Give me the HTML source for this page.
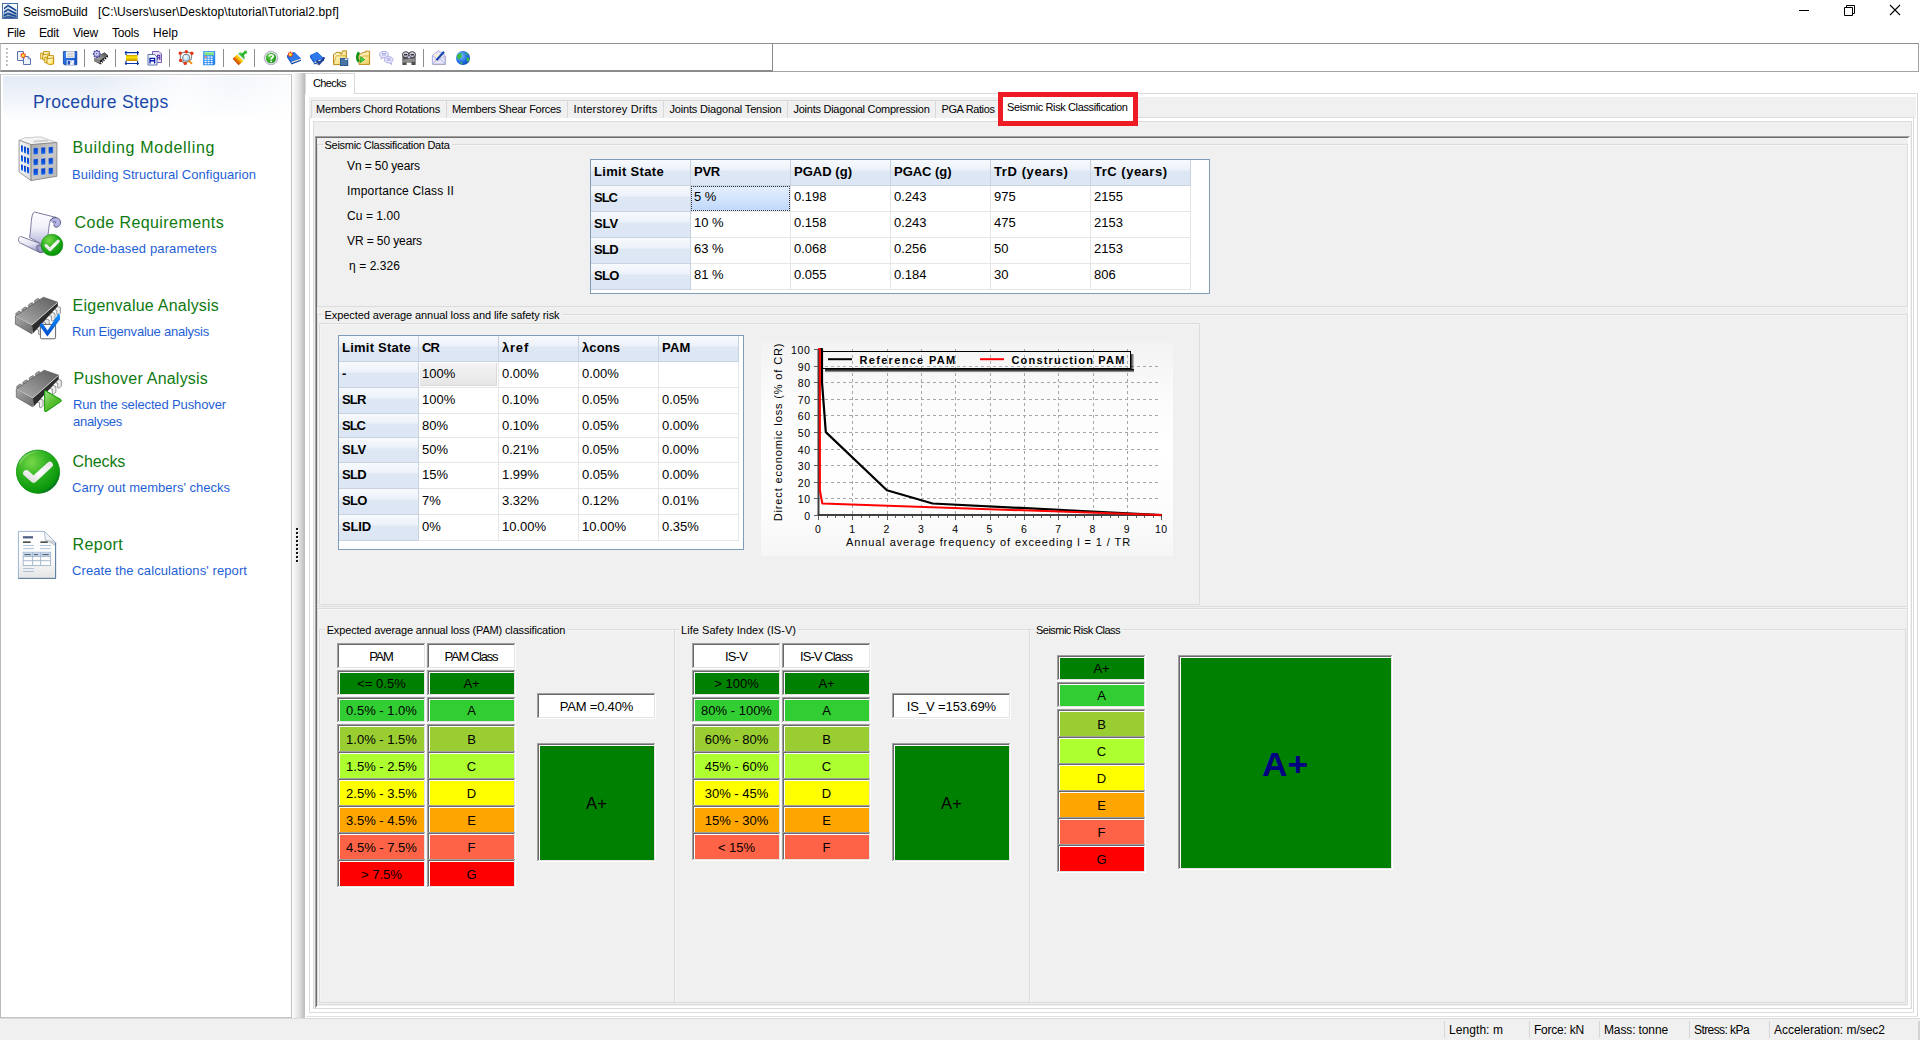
<!DOCTYPE html>
<html>
<head>
<meta charset="utf-8">
<title>SeismoBuild</title>
<style>
*{box-sizing:border-box;margin:0;padding:0}
html,body{width:1920px;height:1040px;overflow:hidden;background:#fff}
body{font-family:"Liberation Sans",sans-serif;font-size:11px;color:#000;position:relative}
.a{position:absolute}
.t{position:absolute;white-space:nowrap;line-height:1}
svg{position:absolute;overflow:visible}
.sep{position:absolute;top:49px;width:1px;height:18px;background:#8e8e8e}
.hc{position:absolute;background:linear-gradient(180deg,#f7fafd 0%,#edf2fa 38%,#dee7f4 46%,#dce6f4 100%);border-right:1px solid #c9d3e0;border-bottom:1px solid #c9d3e0}
.c{position:absolute;background:#fff;border-right:1px solid #e6e6e6;border-bottom:1px solid #e6e6e6}
.bx{position:absolute;border-style:solid;border-width:1px;border-color:#7a7a7a #a9a9a9 #a9a9a9 #7a7a7a;box-shadow:inset 1px 1px 0 #b4b4b4,inset -1px -1px 0 #e8e8e8,1px 1px 0 #fff}
</style>
</head>
<body>
<svg style="left:2px;top:3px" width="16" height="16" viewBox="0 0 16 16"><defs><linearGradient id="ti" x1="0" y1="0" x2="0" y2="1"><stop offset="0" stop-color="#fff"/><stop offset=".45" stop-color="#e8eef6"/><stop offset="1" stop-color="#5c7ca8"/></linearGradient></defs><rect x=".5" y=".5" width="15" height="15" fill="url(#ti)" stroke="#4a70a6"/><path d="M2 4.8L6 1.4L14.4 6.8V8.6L6 3.6L2 6.6ZM2 8.2L6 5.4L14.4 10V11.8L6 7.6L2 10ZM2 11.6L6 9.4L14.4 12.8V14L6 11.4L2 13.2ZM2 14.4L6 13L14.4 14.8H2Z" fill="#0c3e8e"/><path d="M6 1.2V15" stroke="#8ea6c6" stroke-width=".6"/></svg>
<div class="t" style="left:23px;top:6px;font-size:12px;letter-spacing:-0.200px;">SeismoBuild</div>
<div class="t" style="left:98px;top:6px;font-size:12px;letter-spacing:0.102px;">[C:\Users\user\Desktop\tutorial\Tutorial2.bpf]</div>
<svg style="left:1790px;top:-1px" width="130" height="22" viewBox="0 0 130 22"><path d="M9 11.5 H19" stroke="#000" stroke-width="1" fill="none"/><path d="M54.5 8.5 H62.5 V16.5 H54.5Z M56.5 8.5 V6.5 H64.5 V14.5 H62.5" stroke="#000" stroke-width="1" fill="none"/><path d="M100 6 L110 16 M110 6 L100 16" stroke="#000" stroke-width="1.1" fill="none"/></svg>
<div class="t" style="left:7px;top:27px;font-size:12px;letter-spacing:-0.334px;">File</div>
<div class="t" style="left:39px;top:27px;font-size:12px;letter-spacing:-0.170px;">Edit</div>
<div class="t" style="left:73px;top:27px;font-size:12px;letter-spacing:-0.198px;">View</div>
<div class="t" style="left:112px;top:27px;font-size:12px;letter-spacing:-0.203px;">Tools</div>
<div class="t" style="left:153px;top:27px;font-size:12px;letter-spacing:0.080px;">Help</div>
<div class="a" style="left:0px;top:43px;width:773px;height:29px;background:#fff;border-top:1px solid #8f8f8f;border-bottom:2px solid #8c8c8c;border-right:1px solid #8c8c8c;border-left:1px solid #c2c2c2"></div>
<div class="a" style="left:773px;top:43px;width:1146px;height:29px;background:#fff;border-top:1px solid #8f8f8f;border-bottom:1px solid #a3a3a3;border-right:1px solid #a3a3a3"></div>
<svg style="left:5px;top:48px" width="4" height="20" viewBox="0 0 4 20"><rect x="1" y="0" width="2" height="2" fill="#c9c9c9"/><rect x="1" y="0" width="1" height="1" fill="#a8a8a8"/><rect x="1" y="4" width="2" height="2" fill="#c9c9c9"/><rect x="1" y="4" width="1" height="1" fill="#a8a8a8"/><rect x="1" y="8" width="2" height="2" fill="#c9c9c9"/><rect x="1" y="8" width="1" height="1" fill="#a8a8a8"/><rect x="1" y="12" width="2" height="2" fill="#c9c9c9"/><rect x="1" y="12" width="1" height="1" fill="#a8a8a8"/><rect x="1" y="16" width="2" height="2" fill="#c9c9c9"/><rect x="1" y="16" width="1" height="1" fill="#a8a8a8"/></svg>
<div class="sep" style="left:84px"></div>
<div class="sep" style="left:115px"></div>
<div class="sep" style="left:169px"></div>
<div class="sep" style="left:223px"></div>
<div class="sep" style="left:254px"></div>
<div class="sep" style="left:423px"></div>
<div class="a" style="left:0px;top:74px;width:292px;height:944px;background:#fff;border-left:1px solid #b9b9b9;border-right:1px solid #c1c1c1;border-bottom:1px solid #c1c1c1;border-top:1px solid #cfcfcf"></div>
<div class="a" style="left:3px;top:76px;width:287px;height:46px;background:linear-gradient(100deg,rgba(255,255,255,0) 0%,rgba(255,255,255,0) 30%,rgba(255,255,255,.8) 62%,rgba(255,255,255,.55) 78%,rgba(255,255,255,.85) 100%),linear-gradient(180deg,#e4ebf6 0%,#ecf1f9 35%,#f6f8fc 70%,#fff 100%)"></div>
<div class="t" style="left:33px;top:94px;font-size:17.5px;color:#1b48a8;letter-spacing:0.343px;">Procedure Steps</div>
<div class="t" style="left:72.6px;top:140px;font-size:16px;color:#0f7a0f;letter-spacing:0.702px;">Building Modelling</div>
<div class="t" style="left:72px;top:168px;font-size:13px;color:#1f5fd6;letter-spacing:0.037px;">Building Structural Configuarion</div>
<div class="t" style="left:74.6px;top:215px;font-size:16px;color:#0f7a0f;letter-spacing:0.423px;">Code Requirements</div>
<div class="t" style="left:74px;top:242px;font-size:13px;color:#1f5fd6;letter-spacing:0.134px;">Code-based parameters</div>
<div class="t" style="left:72.6px;top:298px;font-size:16px;color:#0f7a0f;letter-spacing:0.220px;">Eigenvalue Analysis</div>
<div class="t" style="left:72px;top:325px;font-size:13px;color:#1f5fd6;letter-spacing:-0.233px;">Run Eigenvalue analysis</div>
<div class="t" style="left:73.6px;top:371px;font-size:16px;color:#0f7a0f;letter-spacing:0.221px;">Pushover Analysis</div>
<div class="t" style="left:73px;top:398px;font-size:13px;color:#1f5fd6;letter-spacing:-0.124px;">Run the selected Pushover</div>
<div class="t" style="left:73px;top:415px;font-size:13px;color:#1f5fd6;letter-spacing:-0.289px;">analyses</div>
<div class="t" style="left:72.6px;top:454px;font-size:16px;color:#0f7a0f;letter-spacing:-0.142px;">Checks</div>
<div class="t" style="left:72px;top:481px;font-size:13px;color:#1f5fd6;letter-spacing:0.008px;">Carry out members' checks</div>
<div class="t" style="left:72.6px;top:537px;font-size:16px;color:#0f7a0f;letter-spacing:0.413px;">Report</div>
<div class="t" style="left:72px;top:564px;font-size:13px;color:#1f5fd6;letter-spacing:0.087px;">Create the calculations' report</div>
<div class="a" style="left:292px;top:73px;width:13px;height:945px;background:linear-gradient(90deg,#fdfdfd 0%,#f4f4f4 20%,#dedede 60%,#c2c2c2 90%,#bcbcbc 100%)"></div>
<svg style="left:296px;top:528px" width="4" height="40" viewBox="0 0 4 40"><rect x="1" y="1" width="2" height="2" fill="#fff"/><rect x="0" y="0" width="2" height="2" fill="#111"/><rect x="1" y="5" width="2" height="2" fill="#fff"/><rect x="0" y="4" width="2" height="2" fill="#111"/><rect x="1" y="9" width="2" height="2" fill="#fff"/><rect x="0" y="8" width="2" height="2" fill="#111"/><rect x="1" y="13" width="2" height="2" fill="#fff"/><rect x="0" y="12" width="2" height="2" fill="#111"/><rect x="1" y="17" width="2" height="2" fill="#fff"/><rect x="0" y="16" width="2" height="2" fill="#111"/><rect x="1" y="21" width="2" height="2" fill="#fff"/><rect x="0" y="20" width="2" height="2" fill="#111"/><rect x="1" y="25" width="2" height="2" fill="#fff"/><rect x="0" y="24" width="2" height="2" fill="#111"/><rect x="1" y="29" width="2" height="2" fill="#fff"/><rect x="0" y="28" width="2" height="2" fill="#111"/><rect x="1" y="33" width="2" height="2" fill="#fff"/><rect x="0" y="32" width="2" height="2" fill="#111"/></svg>
<div class="a" style="left:0px;top:1018px;width:1920px;height:22px;background:#f0f0f0;border-top:1px solid #dadada"></div>
<div class="a" style="left:1444px;top:1021px;width:1px;height:17px;background:#d7d7d7"></div>
<div class="a" style="left:1529px;top:1021px;width:1px;height:17px;background:#d7d7d7"></div>
<div class="a" style="left:1599px;top:1021px;width:1px;height:17px;background:#d7d7d7"></div>
<div class="a" style="left:1689px;top:1021px;width:1px;height:17px;background:#d7d7d7"></div>
<div class="a" style="left:1769px;top:1021px;width:1px;height:17px;background:#d7d7d7"></div>
<div class="t" style="left:1449px;top:1024px;font-size:12px;letter-spacing:0.070px;">Length: m</div>
<div class="t" style="left:1534px;top:1024px;font-size:12px;letter-spacing:-0.223px;">Force: kN</div>
<div class="t" style="left:1604px;top:1024px;font-size:12px;letter-spacing:-0.124px;">Mass: tonne</div>
<div class="t" style="left:1694px;top:1024px;font-size:12px;letter-spacing:-0.578px;">Stress: kPa</div>
<div class="t" style="left:1774px;top:1024px;font-size:12px;letter-spacing:-0.019px;">Acceleration: m/sec2</div>
<div class="a" style="left:1918px;top:1021px;width:2px;height:19px;background:#d4d4d4"></div>
<div class="a" style="left:354px;top:93px;width:1564px;height:1px;background:#d9d9d9"></div>
<div class="a" style="left:1917px;top:93px;width:1px;height:924px;background:#d9d9d9"></div>
<div class="a" style="left:306px;top:1016px;width:1612px;height:1px;background:#e3e3e3"></div>
<div class="a" style="left:305px;top:73px;width:50px;height:21px;background:#fff;border:1px solid #d9d9d9;border-bottom:none"></div>
<div class="t" style="left:313px;top:78px;font-size:11px;letter-spacing:-0.613px;">Checks</div>
<div class="a" style="left:309px;top:97px;width:1607px;height:21px;background:#f0f0f0"></div>
<div class="a" style="left:309px;top:117px;width:1605px;height:896px;background:#fff;border:1px solid #dcdcdc"></div>
<div class="a" style="left:313px;top:121px;width:1599px;height:888px;background:#f0f0f0;border:1px solid #dcdcdc"></div>
<div class="a" style="left:311px;top:100px;width:136px;height:18px;border:1px solid #d9d9d9;border-bottom:none;background:#f0f0f0"></div>
<div class="t" style="left:316px;top:104px;font-size:11px;letter-spacing:-0.191px;">Members Chord Rotations</div>
<div class="a" style="left:446px;top:100px;width:122px;height:18px;border:1px solid #d9d9d9;border-bottom:none;background:#f0f0f0"></div>
<div class="t" style="left:452px;top:104px;font-size:11px;letter-spacing:-0.296px;">Members Shear Forces</div>
<div class="a" style="left:567px;top:100px;width:97px;height:18px;border:1px solid #d9d9d9;border-bottom:none;background:#f0f0f0"></div>
<div class="t" style="left:573.5px;top:104px;font-size:11px;letter-spacing:0.184px;">Interstorey Drifts</div>
<div class="a" style="left:663px;top:100px;width:125px;height:18px;border:1px solid #d9d9d9;border-bottom:none;background:#f0f0f0"></div>
<div class="t" style="left:669.5px;top:104px;font-size:11px;letter-spacing:-0.173px;">Joints Diagonal Tension</div>
<div class="a" style="left:787px;top:100px;width:149px;height:18px;border:1px solid #d9d9d9;border-bottom:none;background:#f0f0f0"></div>
<div class="t" style="left:793.5px;top:104px;font-size:11px;letter-spacing:-0.262px;">Joints Diagonal Compression</div>
<div class="a" style="left:935px;top:100px;width:64px;height:18px;border:1px solid #d9d9d9;border-bottom:none;background:#f0f0f0"></div>
<div class="t" style="left:941.5px;top:104px;font-size:11px;letter-spacing:-0.386px;">PGA Ratios</div>
<div class="a" style="left:998px;top:92px;width:140px;height:34px;background:#fff;border:5px solid #ed1c24"></div>
<div class="t" style="left:1007px;top:102px;font-size:11px;letter-spacing:-0.382px;">Seismic Risk Classification</div>
<div class="a" style="left:315px;top:136px;width:1595px;height:872px;border-top:2px solid #6d6d6d;border-left:2px solid #6d6d6d;border-right:2px solid #fff;border-bottom:2px solid #fff"></div>
<div class="a" style="left:315px;top:136px;width:1594px;height:1px;background:#a2a2a2"></div>
<div class="a" style="left:315px;top:136px;width:1px;height:871px;background:#a2a2a2"></div>
<div class="a" style="left:317px;top:144px;width:1591px;height:1px;background:#dcdcdc"></div>
<div class="a" style="left:318px;top:145px;width:1589px;height:1px;background:#f5f5f5"></div>
<div class="a" style="left:317px;top:144px;width:1px;height:163px;background:#dcdcdc"></div>
<div class="a" style="left:318px;top:145px;width:1px;height:161px;background:#f5f5f5"></div>
<div class="a" style="left:1907px;top:144px;width:1px;height:163px;background:#dcdcdc"></div>
<div class="a" style="left:317px;top:306px;width:1591px;height:1px;background:#dcdcdc"></div>
<div class="a" style="left:322.5px;top:138px;width:129px;height:13px;background:#f0f0f0"></div>
<div class="t" style="left:324.5px;top:140px;font-size:11px;letter-spacing:-0.284px;">Seismic Classification Data</div>
<div class="a" style="left:317px;top:314px;width:1591px;height:1px;background:#dcdcdc"></div>
<div class="a" style="left:318px;top:315px;width:1589px;height:1px;background:#f5f5f5"></div>
<div class="a" style="left:317px;top:314px;width:1px;height:293px;background:#dcdcdc"></div>
<div class="a" style="left:318px;top:315px;width:1px;height:291px;background:#f5f5f5"></div>
<div class="a" style="left:1907px;top:314px;width:1px;height:293px;background:#dcdcdc"></div>
<div class="a" style="left:317px;top:606px;width:1591px;height:1px;background:#dcdcdc"></div>
<div class="a" style="left:322.5px;top:308px;width:239px;height:13px;background:#f0f0f0"></div>
<div class="t" style="left:324.5px;top:310px;font-size:11px;letter-spacing:-0.071px;">Expected average annual loss and life safety risk</div>
<div class="a" style="left:319px;top:323px;width:881px;height:1px;background:#dcdcdc"></div>
<div class="a" style="left:320px;top:324px;width:879px;height:1px;background:#f5f5f5"></div>
<div class="a" style="left:319px;top:323px;width:1px;height:282px;background:#dcdcdc"></div>
<div class="a" style="left:320px;top:324px;width:1px;height:280px;background:#f5f5f5"></div>
<div class="a" style="left:1199px;top:323px;width:1px;height:282px;background:#dcdcdc"></div>
<div class="a" style="left:319px;top:604px;width:881px;height:1px;background:#dcdcdc"></div>
<div class="a" style="left:317px;top:608px;width:1591px;height:1px;background:#dcdcdc"></div>
<div class="a" style="left:318px;top:609px;width:1589px;height:1px;background:#f5f5f5"></div>
<div class="a" style="left:317px;top:608px;width:1px;height:397px;background:#dcdcdc"></div>
<div class="a" style="left:318px;top:609px;width:1px;height:395px;background:#f5f5f5"></div>
<div class="a" style="left:1907px;top:608px;width:1px;height:397px;background:#dcdcdc"></div>
<div class="a" style="left:317px;top:1004px;width:1591px;height:1px;background:#dcdcdc"></div>
<div class="a" style="left:319px;top:629px;width:356px;height:1px;background:#dcdcdc"></div>
<div class="a" style="left:320px;top:630px;width:354px;height:1px;background:#f5f5f5"></div>
<div class="a" style="left:319px;top:629px;width:1px;height:374px;background:#dcdcdc"></div>
<div class="a" style="left:320px;top:630px;width:1px;height:372px;background:#f5f5f5"></div>
<div class="a" style="left:674px;top:629px;width:1px;height:374px;background:#dcdcdc"></div>
<div class="a" style="left:319px;top:1002px;width:356px;height:1px;background:#dcdcdc"></div>
<div class="a" style="left:324.7px;top:623px;width:242.5px;height:13px;background:#f0f0f0"></div>
<div class="t" style="left:326.7px;top:625px;font-size:11px;letter-spacing:-0.157px;">Expected average annual loss (PAM) classification</div>
<div class="a" style="left:674px;top:629px;width:356px;height:1px;background:#dcdcdc"></div>
<div class="a" style="left:675px;top:630px;width:354px;height:1px;background:#f5f5f5"></div>
<div class="a" style="left:674px;top:629px;width:1px;height:374px;background:#dcdcdc"></div>
<div class="a" style="left:675px;top:630px;width:1px;height:372px;background:#f5f5f5"></div>
<div class="a" style="left:1029px;top:629px;width:1px;height:374px;background:#dcdcdc"></div>
<div class="a" style="left:674px;top:1002px;width:356px;height:1px;background:#dcdcdc"></div>
<div class="a" style="left:679px;top:623px;width:119px;height:13px;background:#f0f0f0"></div>
<div class="t" style="left:681px;top:625px;font-size:11px;letter-spacing:0.053px;">Life Safety Index (IS-V)</div>
<div class="a" style="left:1029px;top:629px;width:877px;height:1px;background:#dcdcdc"></div>
<div class="a" style="left:1030px;top:630px;width:875px;height:1px;background:#f5f5f5"></div>
<div class="a" style="left:1029px;top:629px;width:1px;height:374px;background:#dcdcdc"></div>
<div class="a" style="left:1030px;top:630px;width:1px;height:372px;background:#f5f5f5"></div>
<div class="a" style="left:1905px;top:629px;width:1px;height:374px;background:#dcdcdc"></div>
<div class="a" style="left:1029px;top:1002px;width:877px;height:1px;background:#dcdcdc"></div>
<div class="a" style="left:1034px;top:623px;width:88px;height:13px;background:#f0f0f0"></div>
<div class="t" style="left:1036px;top:625px;font-size:11px;letter-spacing:-0.528px;">Seismic Risk Class</div>
<div class="t" style="left:347px;top:160px;font-size:12px;letter-spacing:-0.106px;">Vn = 50 years</div>
<div class="t" style="left:347px;top:185px;font-size:12px;letter-spacing:0.191px;">Importance Class II</div>
<div class="t" style="left:347px;top:210px;font-size:12px;letter-spacing:0.070px;">Cu = 1.00</div>
<div class="t" style="left:347px;top:235px;font-size:12px;letter-spacing:-0.106px;">VR = 50 years</div>
<div class="t" style="left:349px;top:260px;font-size:12px;letter-spacing:0.069px;">η = 2.326</div>
<svg style="left:0;top:0" width="480" height="72" viewBox="0 0 480 72">
<defs><linearGradient id="fy" x1="0" y1="0" x2="1" y2="1"><stop offset="0" stop-color="#fffce4"/><stop offset=".55" stop-color="#fae898"/><stop offset="1" stop-color="#eec450"/></linearGradient><linearGradient id="gy" x1="0" y1="0" x2="0" y2="1"><stop offset="0" stop-color="#c89600"/><stop offset=".35" stop-color="#ffe800"/><stop offset="1" stop-color="#c08c00"/></linearGradient><linearGradient id="bb" x1="0" y1="0" x2="1" y2="1"><stop offset="0" stop-color="#3a86f0"/><stop offset="1" stop-color="#0a48c0"/></linearGradient><radialGradient id="gl" cx=".35" cy=".35" r=".8"><stop offset="0" stop-color="#7cc4ff"/><stop offset=".6" stop-color="#1e68e0"/><stop offset="1" stop-color="#0c3cb0"/></radialGradient><radialGradient id="hg" cx=".4" cy=".35" r=".8"><stop offset="0" stop-color="#5cd040"/><stop offset="1" stop-color="#108a10"/></radialGradient><linearGradient id="br" x1=".75" y1=".25" x2=".2" y2=".8"><stop offset="0" stop-color="#ffe808"/><stop offset=".3" stop-color="#f8c400"/><stop offset=".55" stop-color="#e87800"/><stop offset=".85" stop-color="#c04000"/></linearGradient><linearGradient id="cl" x1="0" y1="0" x2="1" y2="1"><stop offset="0" stop-color="#58b0ff"/><stop offset="1" stop-color="#1c78e8"/></linearGradient><linearGradient id="fy2" x1="0" y1="0" x2="1" y2="1"><stop offset="0" stop-color="#fffef0"/><stop offset=".5" stop-color="#fff0a0"/><stop offset="1" stop-color="#ffd820"/></linearGradient><linearGradient id="chp" x1="0" y1="1" x2="1" y2="0"><stop offset="0" stop-color="#b4b4b4"/><stop offset=".6" stop-color="#787878"/><stop offset="1" stop-color="#484848"/></linearGradient></defs>
<g transform="translate(16 50)"><path d="M1.5 1.5H7.4V10.5H1.5Z" fill="#f0f4fb" stroke="#5a72b0"/><path d="M7.5 6.5H12.2L14.5 8.8V14.5H7.5Z" fill="#eef2fb" stroke="#5a72b0"/><path d="M12.2 6.5V8.8H14.5" fill="#cfd8ee" stroke="#5a72b0" stroke-width=".8"/><path d="M0 -3.3L.9 -1.6L2.7 -2L2 -.4L3.3 .8L1.6 1.2L1.4 3L0 1.9L-1.4 3L-1.6 1.2L-3.3 .8L-2 -.4L-2.7 -2L-.9 -1.6Z" transform="translate(7.2 5.4)" fill="#f0381c"/><circle cx="7.2" cy="5.4" r="1.5" fill="#ffe030"/></g>
<g transform="translate(39 50)"><g transform="translate(1 1)"><path d="M3.4 .6H9.4V7.4H3.4Z" fill="#fff6c0" stroke="#c08a00" stroke-width=".9"/><path d="M.6 2.2H2.6V3.4H3.6V6.6H2.6V7.8H.6Z" fill="#fff0a0" stroke="#c08a00" stroke-width=".8"/><path d="M2.8 3.8L9.4 2.8V9L5.6 9.6L2.8 8.6Z" fill="url(#fy2)" stroke="#c08a00" stroke-width=".9" stroke-linejoin="round"/></g><g transform="translate(5.2 5)"><path d="M3.4 .6H9.4V7.4H3.4Z" fill="#fff6c0" stroke="#c08a00" stroke-width=".9"/><path d="M.6 2.2H2.6V3.4H3.6V6.6H2.6V7.8H.6Z" fill="#fff0a0" stroke="#c08a00" stroke-width=".8"/><path d="M2.8 3.8L9.4 2.8V9L5.6 9.6L2.8 8.6Z" fill="url(#fy2)" stroke="#c08a00" stroke-width=".9" stroke-linejoin="round"/></g></g>
<g transform="translate(62 50)"><path d="M1.4 1.5 H14.8 V14.8 H2.4 L1.4 13.8Z" fill="url(#bb)" stroke="#123c9c" stroke-width=".8"/><rect x="4" y="1.3" width="8.6" height="6.6" fill="#f4f4f4"/><path d="M5 3.2h6.6M5 4.8h6.6M5 6.4h6.6" stroke="#b8b8b8" stroke-width=".7"/><rect x="4.6" y="10.2" width="7.6" height="4.8" fill="#d4dcec"/><rect x="5.8" y="11" width="2.2" height="3.6" fill="#1c50b8"/><path d="M9 14.5 L11.5 10.5" stroke="#fff" stroke-width="1.2"/></g>
<g transform="translate(92 50)"><path d="M2 8.6L12.4 2.6L15.8 5.2L16 7L8.8 14.6L2 11Z" fill="#161616"/><path d="M2 8.6L12.4 2.6L15.8 5.2L7.8 10.8Z" fill="url(#chp)"/><path d="M2 8.6L7.8 10.8L8.4 13.6L2 11Z" fill="#8a8a8a"/><path d="M9 13.2L15.6 6.4" stroke="#fff" stroke-width="1.5" stroke-dasharray="1.2 1.2"/><g transform="translate(4.8 3.8)"><path d="M-.9 -3.9h1.8v7.8h-1.8zM-3.9 -.9h7.8v1.8h-7.8z" fill="#34349a"/><path d="M-.9 -3.9h1.8v7.8h-1.8zM-3.9 -.9h7.8v1.8h-7.8z" fill="#34349a" transform="rotate(45)"/><circle r="2.9" fill="#b4b4e4" stroke="#5858b0" stroke-width=".6"/><circle r="1.5" fill="#e8e8fa"/><circle r=".7" fill="#3c3ca0"/></g></g>
<g transform="translate(124 50)"><rect x="2" y="5" width="11.6" height="6" fill="url(#gy)"/><path d="M.8 2.6H15M.8 13.5H15M2 1V5M13.6 1V5M2 11V15M13.6 11V15" stroke="#0a34a4" stroke-width="1.2" fill="none"/></g>
<g transform="translate(147 50)"><path d="M5.5 1.5H12L14.5 4V12.5H5.5Z" fill="#e8e2f6" stroke="#7a5eb0"/><path d="M10.6 10V5.4h2.2V10M10.6 7.6h2.2" stroke="#5a30a8" stroke-width="1.1" fill="none"/><path d="M1 4.5H7.5L10 7V15H1Z" fill="#fafbff" stroke="#5c70ae"/><path d="M3 13.4V8.4h4.6v5M3 10.8h4.6" stroke="#0a1eb4" stroke-width="1.4" fill="none"/></g>
<g transform="translate(178 50)"><path d="M2.3 3.2L8.3 1.8L13.8 3.2L13.2 9.2L7.2 13.4L2.6 10.4Z" fill="none" stroke="#8c8c8c" stroke-width="1.3"/><path d="M10.4 10.4L14 13.8" stroke="#f09020" stroke-width="2"/><circle cx="8.1" cy="7.7" r="3.4" fill="#c8e8fc" stroke="#808890" stroke-width="1.1"/><circle cx="7.4" cy="7" r="1.4" fill="#f0faff"/><circle cx="2.3" cy="3.2" r="1.7" fill="#e83418"/><circle cx="8.3" cy="1.8" r="1.7" fill="#e83418"/><circle cx="13.8" cy="3.2" r="1.7" fill="#e83418"/><circle cx="2.6" cy="10.4" r="1.7" fill="#e83418"/><circle cx="7.2" cy="13.4" r="1.7" fill="#e83418"/></g>
<g transform="translate(201 50)"><path d="M2 1H14.2V14L13 15.2H2Z" fill="url(#cl)"/><rect x="3.4" y="2.2" width="9.4" height="3" fill="#80e080"/><rect x="3.4" y="2.2" width="9.4" height="1" fill="#b0f0a8"/><rect x="3.6" y="6.4" width="2" height="1.3" fill="#fff"/><rect x="6.6" y="6.4" width="2" height="1.3" fill="#fff"/><rect x="9.6" y="6.4" width="2" height="1.3" fill="#fff"/><rect x="3.6" y="8.6" width="2" height="1.3" fill="#fff"/><rect x="6.6" y="8.6" width="2" height="1.3" fill="#fff"/><rect x="9.6" y="8.6" width="2" height="1.3" fill="#fff"/><rect x="3.6" y="10.8" width="2" height="1.3" fill="#fff"/><rect x="6.6" y="10.8" width="2" height="1.3" fill="#fff"/><rect x="9.6" y="10.8" width="2" height="1.3" fill="#fff"/><rect x="3.6" y="13" width="2" height="1.3" fill="#fff"/><rect x="6.6" y="13" width="2" height="1.3" fill="#fff"/><rect x="9.6" y="13" width="2" height="1.3" fill="#fff"/><rect x="3.6" y="6.4" width="2" height="1.3" fill="#f05040"/></g>
<g transform="translate(232 50)"><path d="M5 4.6L11.4 11L6.6 15.2L.6 8.8Z" fill="url(#br)"/><path d="M6.2 3.4Q8.6 1.6 11.2 3.4Q13.2 6 12.6 9.8Z" fill="#34b834"/><path d="M7.4 3.2Q9 2.4 10.6 3.4" stroke="#90e880" stroke-width=".9" fill="none"/><path d="M11 4.4L13.2 2.4" stroke="#2cae2c" stroke-width="2.2" stroke-linecap="round"/><circle cx="13.4" cy="2.3" r="1.7" fill="#38bc38"/><path d="M5.6 4L12 10.4" stroke="#e4e4f6" stroke-width="1.3"/></g>
<g transform="translate(263 50)"><circle cx="8" cy="8" r="6.8" fill="#d2cce0" stroke="#a49cb8" stroke-width=".7"/><circle cx="8" cy="8" r="5.7" fill="#fff"/><circle cx="8" cy="8" r="5.2" fill="url(#hg)"/><path d="M6 6.4C6 4.2 10.2 4.2 10.2 6.4C10.2 7.8 8.2 7.8 8.2 9.4" stroke="#fff" stroke-width="1.7" fill="none"/><rect x="7.3" y="10.6" width="1.8" height="1.6" fill="#fff"/></g>
<g transform="translate(286 50)"><path d="M1 5.2L8.2 2L15 8.4V10.6L5.4 14.2L1 7.2Z" fill="#1a5cd0"/><path d="M1 5.2L8.2 2L15 8.4L5.6 11.8Z" fill="#2e78ec"/><path d="M5.6 11.8L15 8.4V10L5.6 13.4Z" fill="#f0e6c4"/><path d="M5.4 13.2L15 9.8V10.8L5.4 14.4Z" fill="#1448b0"/><path d="M0 -3.3L.9 -1.6L2.7 -2L2 -.4L3.3 .8L1.6 1.2L1.4 3L0 1.9L-1.4 3L-1.6 1.2L-3.3 .8L-2 -.4L-2.7 -2L-.9 -1.6Z" transform="translate(4.4 4.4)" fill="#f0381c"/><circle cx="4.4" cy="4.4" r="1.5" fill="#ffe030"/></g>
<g transform="translate(309 50)"><path d="M1 5.2L8.2 2L15 8.4V10.6L5.4 14.2L1 7.2Z" fill="#1a5cd0"/><path d="M1 5.2L8.2 2L15 8.4L5.6 11.8Z" fill="#2e78ec"/><path d="M5.6 11.8L15 8.4V10L5.6 13.4Z" fill="#f0e6c4"/><path d="M5.4 13.2L15 9.8V10.8L5.4 14.4Z" fill="#1448b0"/><path d="M7.6 10.4L10.4 13.6L15.4 7.4" stroke="#1c3c9c" stroke-width="2.2" fill="none"/><path d="M7.8 13.6L10 15" stroke="#888" stroke-width="1.4"/></g>
<g transform="translate(332 50)"><path d="M1.5 14.6V4.6L3 4L4 2.4H8.4V4H10V1.4L11 .8H14.4V14.6Z" fill="url(#fy)" stroke="#b68008" stroke-width=".9"/><path d="M1.6 14.6L4.2 5.8H14.2" fill="none" stroke="#c89820" stroke-width=".7"/><rect x="8" y="8" width="8.2" height="8" fill="#2a5a92"/><path d="M9 10h6M9 12h6M9 14h6" stroke="#7c9cc4" stroke-width=".8"/><rect x="13" y="8.4" width="2.6" height="1.6" fill="#d8e4f4"/></g>
<g transform="translate(355 50)"><path d="M4 14.4V4H6.5L7.5 2.4H10.4V1.2H14.6V14.4Z" fill="url(#fy)" stroke="#b68008" stroke-width=".9"/><path d="M4.6 14L7.4 6H14.6" fill="none" stroke="#c89820" stroke-width=".7"/><path d="M3.4 1.4C.2 4 .2 9.6 3 12.6L4.8 11C3 8.4 3.2 5.4 5 3.2Z" fill="#149414"/><path d="M5.6 6.6L9.6 9.6L5.6 12.6Z" fill="#48d048" stroke="#149414" stroke-width=".7"/></g>
<g transform="translate(378 50)"><path d="M6 1.4C9 1.4 10.4 2.8 10.4 4.6C10.4 6.6 8.6 7.8 6 7.8C5.6 7.8 5.2 7.8 4.8 7.7L3 9.2L3.4 7.2C2 6.6 1.6 5.6 1.6 4.6C1.6 2.8 3 1.4 6 1.4Z" fill="#e4e4fc" stroke="#a8a8e0" stroke-width=".9"/><path d="M10.6 6.6C13.4 6.6 15 8 15 9.8C15 10.8 14.4 11.8 13.2 12.4L13.8 14.6L11.6 13C11.2 13 10.8 13 10.6 13C8 13 6.4 11.6 6.4 9.8C6.4 8 8 6.6 10.6 6.6Z" fill="#e4e4fc" stroke="#a8a8e0" stroke-width=".9"/><path d="M4 3.6h4M4 5h4M8.8 8.8h4M8.8 10.2h4" stroke="#9c9cd4" stroke-width=".8"/></g>
<g transform="translate(401 50)"><path d="M1.4 4H14.6V15H1.4Z" fill="#505050"/><path d="M1.4 9.6L14.6 8.2V11.4L5 12.6L1.4 12.2Z" fill="#8c8c8c"/><rect x="5.6" y="12.6" width="4.8" height="2.4" fill="#fff"/><ellipse cx="4.8" cy="4.6" rx="3.3" ry="2.9" fill="#d4d4ea" stroke="#3c3c3c" stroke-width="1"/><ellipse cx="11.2" cy="4.6" rx="3.3" ry="2.9" fill="#d4d4ea" stroke="#3c3c3c" stroke-width="1"/><path d="M3 4.8h3.4M9.6 4.8h3.4" stroke="#333" stroke-width="1.5"/><circle cx="8" cy="7.2" r="1.2" fill="#b8b8e0"/><rect x="1.4" y="1.2" width="13.2" height="3" fill="#fff" opacity="0"/></g>
<g transform="translate(431 50)"><path d="M1.4 5.4L7.6 .8L14 5.4V14.2H1.4Z" fill="#e6e6fc" stroke="#a4a4dc" stroke-width=".9"/><path d="M3.2 5V4H12V7L7.6 10Z" fill="#fbf4d4"/><path d="M1.4 5.6L7.6 10.2L14 5.6M1.6 14L6 9M13.8 14L9.4 9" fill="none" stroke="#b0b0e4" stroke-width=".8"/><path d="M13 1.8L5.4 10.2" stroke="#1646b4" stroke-width="2.2"/><path d="M5.4 10.2L4.4 11.6" stroke="#e8c890" stroke-width="1.6"/><path d="M1.6 14.6H14.6V6" stroke="#8c8c8c" stroke-width=".8" fill="none" opacity=".6"/></g>
<g transform="translate(454 50)"><circle cx="9" cy="8" r="7" fill="url(#gl)"/><path d="M3.2 5.4C4.4 3.6 6.4 2.6 7.8 3L7 4.6L8 6L6.6 8.2L5.2 9.4L3.4 8.2Z" fill="#38c038"/><path d="M11 2L13.6 3.4L14 5.2L12.4 4.6Z" fill="#38c038"/><path d="M13 7.2L15.4 8L15 10.6L13.6 12L12.6 10Z" fill="#38c038"/><path d="M6.6 12L8.4 12.4L8.2 14.2L6.4 13.6Z" fill="#38c038"/></g>
</svg>
<svg style="left:0;top:125px" width="80" height="470" viewBox="0 125 80 470">
<defs><linearGradient id="wb" x1="0" y1="0" x2="0" y2="1"><stop offset="0" stop-color="#0844cc"/><stop offset=".65" stop-color="#0c52dc"/><stop offset="1" stop-color="#3080f0"/></linearGradient><linearGradient id="wl" x1="0" y1="0" x2="1" y2="0"><stop offset="0" stop-color="#f8f8f8"/><stop offset="1" stop-color="#dcdcdc"/></linearGradient><linearGradient id="wr" x1="0" y1="0" x2="1" y2="1"><stop offset="0" stop-color="#a8a8a8"/><stop offset=".5" stop-color="#cacaca"/><stop offset="1" stop-color="#b4b4b4"/></linearGradient><linearGradient id="sc" x1="0" y1="0" x2="0" y2="1"><stop offset="0" stop-color="#fdfdff"/><stop offset=".5" stop-color="#f0f0fa"/><stop offset="1" stop-color="#b8b8dc"/></linearGradient><linearGradient id="sr" x1="0" y1="0" x2=".4" y2="1"><stop offset="0" stop-color="#fff"/><stop offset=".6" stop-color="#e0e0f0"/><stop offset="1" stop-color="#9c9cc8"/></linearGradient><radialGradient id="gc" cx=".35" cy=".28" r=".85"><stop offset="0" stop-color="#78d848"/><stop offset=".45" stop-color="#2cb020"/><stop offset=".8" stop-color="#0a980a"/><stop offset="1" stop-color="#0a8a0a"/></radialGradient><linearGradient id="ck" x1="0" y1="1" x2="1" y2="0"><stop offset="0" stop-color="#dcdcdc"/><stop offset=".5" stop-color="#fff"/><stop offset="1" stop-color="#e8e8e8"/></linearGradient><linearGradient id="c1a" x1="0" y1="0" x2="1" y2="1"><stop offset="0" stop-color="#a8a8a8"/><stop offset="1" stop-color="#6c6c6c"/></linearGradient><linearGradient id="c1b" x1="0" y1="1" x2="1" y2="0"><stop offset="0" stop-color="#b0b0b0"/><stop offset=".5" stop-color="#868686"/><stop offset="1" stop-color="#5c5c5c"/></linearGradient><linearGradient id="c2a" x1="0" y1="0" x2="1" y2="1"><stop offset="0" stop-color="#a8a8a8"/><stop offset="1" stop-color="#6c6c6c"/></linearGradient><linearGradient id="c2b" x1="0" y1="1" x2="1" y2="0"><stop offset="0" stop-color="#b0b0b0"/><stop offset=".5" stop-color="#868686"/><stop offset="1" stop-color="#5c5c5c"/></linearGradient><linearGradient id="bc" x1="0" y1="0" x2="0" y2="1"><stop offset="0" stop-color="#1898ff"/><stop offset="1" stop-color="#0048c8"/></linearGradient><linearGradient id="pl" x1="0" y1="0" x2="1" y2="1"><stop offset="0" stop-color="#a0e088"/><stop offset=".5" stop-color="#58c030"/><stop offset="1" stop-color="#38a818"/></linearGradient><linearGradient id="pg" x1="0" y1="0" x2="0" y2="1"><stop offset="0" stop-color="#fff"/><stop offset=".6" stop-color="#fafafa"/><stop offset="1" stop-color="#e4e4e4"/></linearGradient></defs>
<path d="M19.1 140.3L24.6 137.8L33 137.6L33.4 137H42L42.5 137.5L56.9 142.5L31.1 144.8Z" fill="#f4f4f4" stroke="#b8b8b8" stroke-width=".7"/><path d="M33.2 140.4L47 139.6L49 141.6L33.6 142.6Z" fill="#d0d0d0"/><path d="M19.1 140.3L31.1 144.6V180.6L19.1 172Z" fill="url(#wl)" stroke="#8c8c8c" stroke-width=".9"/><path d="M31.1 144.6L56.9 142.5V176.3L31.1 180.6Z" fill="url(#wr)" stroke="#868686" stroke-width=".9"/><path d="M33.2 147.8L38.2 147.4V154.5L33.2 155Z" fill="url(#wb)" stroke="#e4d8c8" stroke-width=".5"/><path d="M40.9 147.35L45.6 146.95V154.05L40.9 154.55Z" fill="url(#wb)" stroke="#e4d8c8" stroke-width=".5"/><path d="M48.3 146.9L53.2 146.5V153.6L48.3 154.1Z" fill="url(#wb)" stroke="#e4d8c8" stroke-width=".5"/><path d="M33.2 158.9L38.2 158.5V165.3L33.2 165.8Z" fill="url(#wb)" stroke="#e4d8c8" stroke-width=".5"/><path d="M40.9 158.45L45.6 158.05V164.85L40.9 165.35Z" fill="url(#wb)" stroke="#e4d8c8" stroke-width=".5"/><path d="M48.3 158L53.2 157.6V164.4L48.3 164.9Z" fill="url(#wb)" stroke="#e4d8c8" stroke-width=".5"/><path d="M33.2 168.7L38.2 168.3V175.2L33.2 175.7Z" fill="url(#wb)" stroke="#e4d8c8" stroke-width=".5"/><path d="M40.9 168.25L45.6 167.85V174.75L40.9 175.25Z" fill="url(#wb)" stroke="#e4d8c8" stroke-width=".5"/><path d="M48.3 167.8L53.2 167.4V174.3L48.3 174.8Z" fill="url(#wb)" stroke="#e4d8c8" stroke-width=".5"/><path d="M21 145L22.9 145.7V152.4L21 151.5Z" fill="url(#wb)"/><path d="M24 146.3L26 147V153.7L24 152.8Z" fill="url(#wb)"/><path d="M27 147.6L29.1 148.3V155L27 154.1Z" fill="url(#wb)"/><path d="M21 155L22.9 155.7V161.9L21 161Z" fill="url(#wb)"/><path d="M24 156.3L26 157V163.2L24 162.3Z" fill="url(#wb)"/><path d="M27 157.6L29.1 158.3V164.5L27 163.6Z" fill="url(#wb)"/><path d="M21 164.2L22.9 164.9V171.1L21 170.2Z" fill="url(#wb)"/><path d="M24 165.5L26 166.2V172.4L24 171.5Z" fill="url(#wb)"/><path d="M27 166.8L29.1 167.5V173.7L27 172.8Z" fill="url(#wb)"/>
<path d="M34.5 212C30.5 213 31.6 228 29.5 237.4L40.6 243.8L47 240C49 232 48.6 224 50.6 220C52 217.6 54 217.4 56 217.4Z" fill="url(#sc)" stroke="#5c5c88" stroke-width=".8"/><path d="M50.4 221C51.6 217.4 57 216.4 59.6 219.4C62 222.4 60 227.4 56 227.2C54.4 227 53.6 225.6 54 224.4" fill="#b4b4e4" stroke="#50507c" stroke-width=".9"/><path d="M53 222.4C54 221 56 221.4 55.6 223.2" fill="none" stroke="#50507c" stroke-width=".9"/><path d="M20.6 236.4C17.6 237.6 18 242 20.6 243.2L38.6 252C41.6 253.4 44.4 252.6 45 250L40.4 243.6Z" fill="url(#sr)" stroke="#606088" stroke-width=".8"/><ellipse cx="39.8" cy="248.6" rx="2.6" ry="4" transform="rotate(-25 39.8 248.6)" fill="#9c9cc4" stroke="#50507c" stroke-width=".7"/><circle cx="52" cy="245" r="10.8" fill="url(#gc)" stroke="#0c8c0c" stroke-width=".6"/><path d="M59 251A10.8 10.8 0 0 0 62.6 243A14 14 0 0 1 52 255.8A10.8 10.8 0 0 0 59 251Z" fill="#0a7a24" opacity=".8"/><path d="M46 245.6L50 249.6L58.2 241.2" fill="none" stroke="url(#ck)" stroke-width="3.2" stroke-linecap="round" stroke-linejoin="round"/>
<g transform="translate(0 0)"><rect x="15.7" y="311.9" width="5.4" height="3" rx="1.3" transform="rotate(-34 18.4 313.4)" fill="#a4a4a4" stroke="#5c5c5c" stroke-width=".7"/><rect x="21.8" y="307.8" width="5.4" height="3" rx="1.3" transform="rotate(-34 24.5 309.3)" fill="#a4a4a4" stroke="#5c5c5c" stroke-width=".7"/><rect x="28.2" y="303.5" width="5.4" height="3" rx="1.3" transform="rotate(-34 30.9 305)" fill="#a4a4a4" stroke="#5c5c5c" stroke-width=".7"/><rect x="34.3" y="299.3" width="5.4" height="3" rx="1.3" transform="rotate(-34 37 300.8)" fill="#a4a4a4" stroke="#5c5c5c" stroke-width=".7"/><path d="M36.6 328.6 l2.6 -2.6 l3 1 v5.8 l-2.2 2 l-1.4 -.6 v-4.4 l-2 -.4z" fill="#ececec" stroke="#6a6a6a" stroke-width=".7"/><path d="M43.6 321.6 l2.6 -2.6 l3 1 v5.8 l-2.2 2 l-1.4 -.6 v-4.4 l-2 -.4z" fill="#ececec" stroke="#6a6a6a" stroke-width=".7"/><path d="M49.4 315 l2.6 -2.6 l3 1 v5.8 l-2.2 2 l-1.4 -.6 v-4.4 l-2 -.4z" fill="#ececec" stroke="#6a6a6a" stroke-width=".7"/><path d="M54.8 309 l2.6 -2.6 l3 1 v5.8 l-2.2 2 l-1.4 -.6 v-4.4 l-2 -.4z" fill="#ececec" stroke="#6a6a6a" stroke-width=".7"/><path d="M32 324.9L57.8 302.2V306L32.6 333.8Z" fill="#2c2c2c"/><path d="M15.4 316L32 324.9L31.6 333.8L15.4 324.2Z" fill="url(#c1a)" stroke="#4a4a4a" stroke-width=".6"/><path d="M15.4 316L43.4 297.2L57.8 302.2L32 324.9Z" fill="url(#c1b)" stroke="#4a4a4a" stroke-width=".6"/><path d="M15.8 316.2L32 324.9L57.4 302.6" fill="none" stroke="#d8d8d8" stroke-width=".9"/></g><rect x="40.4" y="324.4" width="15.2" height="14.4" rx="1.6" fill="#fbfbfb" stroke="#555" stroke-width=".9"/><path d="M39.4 325.4L41.8 322.6L47.6 330.6L58.6 313.2L60 315.4V319.4L47.4 336.4Z" fill="url(#bc)"/>
<g transform="translate(0.9 73)"><rect x="15.7" y="311.9" width="5.4" height="3" rx="1.3" transform="rotate(-34 18.4 313.4)" fill="#a4a4a4" stroke="#5c5c5c" stroke-width=".7"/><rect x="21.8" y="307.8" width="5.4" height="3" rx="1.3" transform="rotate(-34 24.5 309.3)" fill="#a4a4a4" stroke="#5c5c5c" stroke-width=".7"/><rect x="28.2" y="303.5" width="5.4" height="3" rx="1.3" transform="rotate(-34 30.9 305)" fill="#a4a4a4" stroke="#5c5c5c" stroke-width=".7"/><rect x="34.3" y="299.3" width="5.4" height="3" rx="1.3" transform="rotate(-34 37 300.8)" fill="#a4a4a4" stroke="#5c5c5c" stroke-width=".7"/><path d="M36.6 328.6 l2.6 -2.6 l3 1 v5.8 l-2.2 2 l-1.4 -.6 v-4.4 l-2 -.4z" fill="#ececec" stroke="#6a6a6a" stroke-width=".7"/><path d="M43.6 321.6 l2.6 -2.6 l3 1 v5.8 l-2.2 2 l-1.4 -.6 v-4.4 l-2 -.4z" fill="#ececec" stroke="#6a6a6a" stroke-width=".7"/><path d="M49.4 315 l2.6 -2.6 l3 1 v5.8 l-2.2 2 l-1.4 -.6 v-4.4 l-2 -.4z" fill="#ececec" stroke="#6a6a6a" stroke-width=".7"/><path d="M54.8 309 l2.6 -2.6 l3 1 v5.8 l-2.2 2 l-1.4 -.6 v-4.4 l-2 -.4z" fill="#ececec" stroke="#6a6a6a" stroke-width=".7"/><path d="M32 324.9L57.8 302.2V306L32.6 333.8Z" fill="#2c2c2c"/><path d="M15.4 316L32 324.9L31.6 333.8L15.4 324.2Z" fill="url(#c2a)" stroke="#4a4a4a" stroke-width=".6"/><path d="M15.4 316L43.4 297.2L57.8 302.2L32 324.9Z" fill="url(#c2b)" stroke="#4a4a4a" stroke-width=".6"/><path d="M15.8 316.2L32 324.9L57.4 302.6" fill="none" stroke="#d8d8d8" stroke-width=".9"/></g><path d="M45.8 391L60.6 399.6Q62 400.6 60.6 401.6L46.4 411.2Q44.6 412 44.6 410.2V392Q44.6 390.4 45.8 391Z" fill="url(#pl)" stroke="#22a012" stroke-width="1.1" stroke-linejoin="round"/>
<circle cx="38" cy="471.7" r="21.6" fill="url(#gc)" stroke="#0c940c" stroke-width=".8"/><path d="M52 488.6A21.6 21.6 0 0 0 59.4 470A27 27 0 0 1 36 493.2A21.6 21.6 0 0 0 52 488.6Z" fill="#0a7828" opacity=".85"/><path d="M19.4 462A21 21 0 0 1 40 451.4A24 24 0 0 0 19.4 466Z" fill="#a8e890" opacity=".45"/><path d="M26.2 473.2L33.6 479.6L49.8 464.8" fill="none" stroke="url(#ck)" stroke-width="6.2" stroke-linecap="round" stroke-linejoin="round"/>
<path d="M18.4 531.4H44.4L55.6 542.4V578.4H18.4Z" fill="url(#pg)" stroke="#9cb2ce" stroke-width="1"/><path d="M55.6 542.4V578.4H18.4" fill="none" stroke="#5c7ca4" stroke-width="1"/><path d="M44.4 531.4L45.4 540.6Q50 540 55.6 542.6Z" fill="#f4f4f4" stroke="#9cb2ce" stroke-width=".8"/><path d="M46 541.4Q51 541 55.2 543.4L55.2 546Q51 542.4 46 541.4Z" fill="#888" opacity=".45"/><rect x="23" y="536.2" width="10" height="2.2" fill="#4a5c84"/><rect x="23" y="541.4" width="7.6" height="1.5" fill="#3c3c3c"/><rect x="40.4" y="541.4" width="7.4" height="1.5" fill="#3c3c3c"/><path d="M23 545.5H34M40 545.5H51M23 548.6H34M40 548.6H51M23 568.5H34M23 571.5H34" stroke="#a8bcd4" stroke-width=".9"/><rect x="23.2" y="552.3" width="27.4" height="13.3" fill="#fdfdfd" stroke="#a0b4cc" stroke-width=".9"/><rect x="23.6" y="552.7" width="26.6" height="3.6" fill="#c8d8ec"/><path d="M23.2 556.5H50.6M23.2 560.7H50.6M32.6 552.3V565.6M40.6 552.3V565.6" stroke="#a0b4cc" stroke-width=".9"/><path d="M24.4 554.6h6.4M34 554.6h4M42.4 554.6h6.4" stroke="#505868" stroke-width="1"/>
</svg>
<div class="a" style="left:590px;top:159px;width:620px;height:135px;background:#fff;border:1px solid #7f9db9"></div>
<div class="hc" style="left:591px;top:160px;width:100px;height:26px;"></div>
<div class="t" style="left:594px;top:165px;font-size:13px;font-weight:bold;letter-spacing:0.322px;">Limit State</div>
<div class="hc" style="left:691px;top:160px;width:100px;height:26px;"></div>
<div class="t" style="left:694px;top:165px;font-size:13px;font-weight:bold;letter-spacing:-0.243px;">PVR</div>
<div class="hc" style="left:791px;top:160px;width:100px;height:26px;"></div>
<div class="t" style="left:794px;top:165px;font-size:13px;font-weight:bold;letter-spacing:0.029px;">PGAD (g)</div>
<div class="hc" style="left:891px;top:160px;width:100px;height:26px;"></div>
<div class="t" style="left:894px;top:165px;font-size:13px;font-weight:bold;letter-spacing:-0.034px;">PGAC (g)</div>
<div class="hc" style="left:991px;top:160px;width:100px;height:26px;"></div>
<div class="t" style="left:994px;top:165px;font-size:13px;font-weight:bold;letter-spacing:0.598px;">TrD (years)</div>
<div class="hc" style="left:1091px;top:160px;width:100px;height:26px;"></div>
<div class="t" style="left:1094px;top:165px;font-size:13px;font-weight:bold;letter-spacing:0.507px;">TrC (years)</div>
<div class="hc" style="left:591px;top:186px;width:100px;height:26px;"></div>
<div class="t" style="left:594px;top:191px;font-size:13px;font-weight:bold;letter-spacing:-1.000px;">SLC</div>
<div class="c" style="left:691px;top:186px;width:100px;height:26px;"></div>
<div class="c" style="left:791px;top:186px;width:100px;height:26px;"></div>
<div class="t" style="left:794px;top:190px;font-size:13px;">0.198</div>
<div class="c" style="left:891px;top:186px;width:100px;height:26px;"></div>
<div class="t" style="left:894px;top:190px;font-size:13px;">0.243</div>
<div class="c" style="left:991px;top:186px;width:100px;height:26px;"></div>
<div class="t" style="left:994px;top:190px;font-size:13px;">975</div>
<div class="c" style="left:1091px;top:186px;width:100px;height:26px;"></div>
<div class="t" style="left:1094px;top:190px;font-size:13px;">2155</div>
<div class="hc" style="left:591px;top:212px;width:100px;height:26px;"></div>
<div class="t" style="left:594px;top:217px;font-size:13px;font-weight:bold;letter-spacing:-0.106px;">SLV</div>
<div class="c" style="left:691px;top:212px;width:100px;height:26px;"></div>
<div class="t" style="left:694px;top:216px;font-size:13px;">10 %</div>
<div class="c" style="left:791px;top:212px;width:100px;height:26px;"></div>
<div class="t" style="left:794px;top:216px;font-size:13px;">0.158</div>
<div class="c" style="left:891px;top:212px;width:100px;height:26px;"></div>
<div class="t" style="left:894px;top:216px;font-size:13px;">0.243</div>
<div class="c" style="left:991px;top:212px;width:100px;height:26px;"></div>
<div class="t" style="left:994px;top:216px;font-size:13px;">475</div>
<div class="c" style="left:1091px;top:212px;width:100px;height:26px;"></div>
<div class="t" style="left:1094px;top:216px;font-size:13px;">2153</div>
<div class="hc" style="left:591px;top:238px;width:100px;height:26px;"></div>
<div class="t" style="left:594px;top:243px;font-size:13px;font-weight:bold;letter-spacing:-0.667px;">SLD</div>
<div class="c" style="left:691px;top:238px;width:100px;height:26px;"></div>
<div class="t" style="left:694px;top:242px;font-size:13px;">63 %</div>
<div class="c" style="left:791px;top:238px;width:100px;height:26px;"></div>
<div class="t" style="left:794px;top:242px;font-size:13px;">0.068</div>
<div class="c" style="left:891px;top:238px;width:100px;height:26px;"></div>
<div class="t" style="left:894px;top:242px;font-size:13px;">0.256</div>
<div class="c" style="left:991px;top:238px;width:100px;height:26px;"></div>
<div class="t" style="left:994px;top:242px;font-size:13px;">50</div>
<div class="c" style="left:1091px;top:238px;width:100px;height:26px;"></div>
<div class="t" style="left:1094px;top:242px;font-size:13px;">2153</div>
<div class="hc" style="left:591px;top:264px;width:100px;height:26px;"></div>
<div class="t" style="left:594px;top:269px;font-size:13px;font-weight:bold;letter-spacing:-0.741px;">SLO</div>
<div class="c" style="left:691px;top:264px;width:100px;height:26px;"></div>
<div class="t" style="left:694px;top:268px;font-size:13px;">81 %</div>
<div class="c" style="left:791px;top:264px;width:100px;height:26px;"></div>
<div class="t" style="left:794px;top:268px;font-size:13px;">0.055</div>
<div class="c" style="left:891px;top:264px;width:100px;height:26px;"></div>
<div class="t" style="left:894px;top:268px;font-size:13px;">0.184</div>
<div class="c" style="left:991px;top:264px;width:100px;height:26px;"></div>
<div class="t" style="left:994px;top:268px;font-size:13px;">30</div>
<div class="c" style="left:1091px;top:264px;width:100px;height:26px;"></div>
<div class="t" style="left:1094px;top:268px;font-size:13px;">806</div>
<div class="a" style="left:691px;top:186px;width:99px;height:25px;background:linear-gradient(180deg,#e3eefd 0%,#d3e4fc 50%,#c0d9fb 100%);border:1px dotted #333"></div>
<div class="t" style="left:694px;top:190px;font-size:13px;">5 %</div>
<div class="a" style="left:338px;top:335px;width:406px;height:215px;background:#fff;border:1px solid #7f9db9"></div>
<div class="hc" style="left:339px;top:336px;width:80px;height:26px;"></div>
<div class="t" style="left:342px;top:341px;font-size:13px;font-weight:bold;letter-spacing:0.231px;">Limit State</div>
<div class="hc" style="left:419px;top:336px;width:80px;height:26px;"></div>
<div class="t" style="left:422px;top:341px;font-size:13px;font-weight:bold;letter-spacing:-0.888px;">CR</div>
<div class="hc" style="left:499px;top:336px;width:80px;height:26px;"></div>
<div class="t" style="left:502px;top:341px;font-size:13px;font-weight:bold;letter-spacing:0.788px;">λref</div>
<div class="hc" style="left:579px;top:336px;width:80px;height:26px;"></div>
<div class="t" style="left:582px;top:341px;font-size:13px;font-weight:bold;letter-spacing:0.085px;">λcons</div>
<div class="hc" style="left:659px;top:336px;width:80px;height:26px;"></div>
<div class="t" style="left:662px;top:341px;font-size:13px;font-weight:bold;letter-spacing:0.225px;">PAM</div>
<div class="hc" style="left:339px;top:362px;width:80px;height:26px;"></div>
<div class="t" style="left:342px;top:367px;font-size:13px;font-weight:bold;letter-spacing:-0.029px;">-</div>
<div class="c" style="left:419px;top:362px;width:80px;height:26px;"></div>
<div class="c" style="left:499px;top:362px;width:80px;height:26px;"></div>
<div class="t" style="left:502px;top:367px;font-size:13px;">0.00%</div>
<div class="c" style="left:579px;top:362px;width:80px;height:26px;"></div>
<div class="t" style="left:582px;top:367px;font-size:13px;">0.00%</div>
<div class="c" style="left:659px;top:362px;width:80px;height:26px;"></div>
<div class="hc" style="left:339px;top:388px;width:80px;height:26px;"></div>
<div class="t" style="left:342px;top:393px;font-size:13px;font-weight:bold;letter-spacing:-0.834px;">SLR</div>
<div class="c" style="left:419px;top:388px;width:80px;height:26px;"></div>
<div class="t" style="left:422px;top:393px;font-size:13px;">100%</div>
<div class="c" style="left:499px;top:388px;width:80px;height:26px;"></div>
<div class="t" style="left:502px;top:393px;font-size:13px;">0.10%</div>
<div class="c" style="left:579px;top:388px;width:80px;height:26px;"></div>
<div class="t" style="left:582px;top:393px;font-size:13px;">0.05%</div>
<div class="c" style="left:659px;top:388px;width:80px;height:26px;"></div>
<div class="t" style="left:662px;top:393px;font-size:13px;">0.05%</div>
<div class="hc" style="left:339px;top:414px;width:80px;height:24px;"></div>
<div class="t" style="left:342px;top:419px;font-size:13px;font-weight:bold;letter-spacing:-1.000px;">SLC</div>
<div class="c" style="left:419px;top:414px;width:80px;height:24px;"></div>
<div class="t" style="left:422px;top:419px;font-size:13px;">80%</div>
<div class="c" style="left:499px;top:414px;width:80px;height:24px;"></div>
<div class="t" style="left:502px;top:419px;font-size:13px;">0.10%</div>
<div class="c" style="left:579px;top:414px;width:80px;height:24px;"></div>
<div class="t" style="left:582px;top:419px;font-size:13px;">0.05%</div>
<div class="c" style="left:659px;top:414px;width:80px;height:24px;"></div>
<div class="t" style="left:662px;top:419px;font-size:13px;">0.00%</div>
<div class="hc" style="left:339px;top:438px;width:80px;height:25px;"></div>
<div class="t" style="left:342px;top:443px;font-size:13px;font-weight:bold;letter-spacing:-0.106px;">SLV</div>
<div class="c" style="left:419px;top:438px;width:80px;height:25px;"></div>
<div class="t" style="left:422px;top:443px;font-size:13px;">50%</div>
<div class="c" style="left:499px;top:438px;width:80px;height:25px;"></div>
<div class="t" style="left:502px;top:443px;font-size:13px;">0.21%</div>
<div class="c" style="left:579px;top:438px;width:80px;height:25px;"></div>
<div class="t" style="left:582px;top:443px;font-size:13px;">0.05%</div>
<div class="c" style="left:659px;top:438px;width:80px;height:25px;"></div>
<div class="t" style="left:662px;top:443px;font-size:13px;">0.00%</div>
<div class="hc" style="left:339px;top:463px;width:80px;height:26px;"></div>
<div class="t" style="left:342px;top:468px;font-size:13px;font-weight:bold;letter-spacing:-0.667px;">SLD</div>
<div class="c" style="left:419px;top:463px;width:80px;height:26px;"></div>
<div class="t" style="left:422px;top:468px;font-size:13px;">15%</div>
<div class="c" style="left:499px;top:463px;width:80px;height:26px;"></div>
<div class="t" style="left:502px;top:468px;font-size:13px;">1.99%</div>
<div class="c" style="left:579px;top:463px;width:80px;height:26px;"></div>
<div class="t" style="left:582px;top:468px;font-size:13px;">0.05%</div>
<div class="c" style="left:659px;top:463px;width:80px;height:26px;"></div>
<div class="t" style="left:662px;top:468px;font-size:13px;">0.00%</div>
<div class="hc" style="left:339px;top:489px;width:80px;height:26px;"></div>
<div class="t" style="left:342px;top:494px;font-size:13px;font-weight:bold;letter-spacing:-0.741px;">SLO</div>
<div class="c" style="left:419px;top:489px;width:80px;height:26px;"></div>
<div class="t" style="left:422px;top:494px;font-size:13px;">7%</div>
<div class="c" style="left:499px;top:489px;width:80px;height:26px;"></div>
<div class="t" style="left:502px;top:494px;font-size:13px;">3.32%</div>
<div class="c" style="left:579px;top:489px;width:80px;height:26px;"></div>
<div class="t" style="left:582px;top:494px;font-size:13px;">0.12%</div>
<div class="c" style="left:659px;top:489px;width:80px;height:26px;"></div>
<div class="t" style="left:662px;top:494px;font-size:13px;">0.01%</div>
<div class="hc" style="left:339px;top:515px;width:80px;height:26px;"></div>
<div class="t" style="left:342px;top:520px;font-size:13px;font-weight:bold;letter-spacing:-0.153px;">SLID</div>
<div class="c" style="left:419px;top:515px;width:80px;height:26px;"></div>
<div class="t" style="left:422px;top:520px;font-size:13px;">0%</div>
<div class="c" style="left:499px;top:515px;width:80px;height:26px;"></div>
<div class="t" style="left:502px;top:520px;font-size:13px;">10.00%</div>
<div class="c" style="left:579px;top:515px;width:80px;height:26px;"></div>
<div class="t" style="left:582px;top:520px;font-size:13px;">10.00%</div>
<div class="c" style="left:659px;top:515px;width:80px;height:26px;"></div>
<div class="t" style="left:662px;top:520px;font-size:13px;">0.35%</div>
<div class="a" style="left:419px;top:362px;width:79px;height:25px;background:linear-gradient(180deg,#f3f3f3 0%,#ececec 60%,#e4e4e4 100%);border:1px solid #fff;box-shadow:inset -1px -1px 0 #d9d9d9"></div>
<div class="t" style="left:422px;top:367px;font-size:13px;">100%</div>
<div class="a" style="left:761px;top:343px;width:412px;height:213px;background:linear-gradient(180deg,#f3f3f3 0%,#fbfbfb 25%,#fff 50%,#fcfcfc 80%,#f6f6f6 100%)"></div>
<svg style="left:761px;top:343px" width="412" height="213" viewBox="761 343 412 213">
<path d="M852.5 349.0 V514.0 M887.5 349.0 V514.0 M921.5 349.0 V514.0 M955.5 349.0 V514.0 M990.5 349.0 V514.0 M1024.5 349.0 V514.0 M1058.5 349.0 V514.0 M1093.5 349.0 V514.0 M1127.5 349.0 V514.0 M819.0 498.5 H1158.3 M819.0 482.5 H1158.3 M819.0 465.5 H1158.3 M819.0 449.5 H1158.3 M819.0 432.5 H1158.3 M819.0 415.5 H1158.3 M819.0 399.5 H1158.3 M819.0 382.5 H1158.3 M819.0 366.5 H1158.3 " stroke="#a6a6a6" stroke-width="1" stroke-dasharray="3 3" fill="none" shape-rendering="crispEdges"/>
<rect x="817.5" y="349" width="2" height="167" fill="#404040"/>
<rect x="817.5" y="514" width="344" height="2" fill="#404040"/>
<path d="M814 515.5 H818 M814 498.5 H818 M814 482.5 H818 M814 465.5 H818 M814 449.5 H818 M814 432.5 H818 M814 415.5 H818 M814 399.5 H818 M814 382.5 H818 M814 366.5 H818 M814 349.5 H818 M818.5 516 V520.0 M827.5 516 V518.0 M835.5 516 V518.0 M844.5 516 V518.0 M852.5 516 V520.0 M861.5 516 V518.0 M869.5 516 V518.0 M878.5 516 V518.0 M887.5 516 V520.0 M895.5 516 V518.0 M904.5 516 V518.0 M912.5 516 V518.0 M921.5 516 V520.0 M930.5 516 V518.0 M938.5 516 V518.0 M947.5 516 V518.0 M955.5 516 V520.0 M964.5 516 V518.0 M972.5 516 V518.0 M981.5 516 V518.0 M990.5 516 V520.0 M998.5 516 V518.0 M1007.5 516 V518.0 M1015.5 516 V518.0 M1024.5 516 V520.0 M1033.5 516 V518.0 M1041.5 516 V518.0 M1050.5 516 V518.0 M1058.5 516 V520.0 M1067.5 516 V518.0 M1075.5 516 V518.0 M1084.5 516 V518.0 M1093.5 516 V520.0 M1101.5 516 V518.0 M1110.5 516 V518.0 M1118.5 516 V518.0 M1127.5 516 V520.0 M1136.5 516 V518.0 M1144.5 516 V518.0 M1153.5 516 V518.0 M1161.5 516 V520.0 " stroke="#606060" stroke-width="1" fill="none" shape-rendering="crispEdges"/>
<path d="M818.6 349.0 L822.0 349.0 L822.0 382.2 L825.8 432.1 L886.9 490.2 L932.6 503.5 L1161.9 515.1" stroke="#000" stroke-width="2.2" fill="none" stroke-linejoin="round"/>
<path d="M818.2 349.0 L819.9 349.0 L819.9 382.2 L819.9 432.1 L819.9 490.2 L822.3 503.5 L1161.5 515.1" stroke="#f00" stroke-width="2" fill="none" stroke-linejoin="round"/>
<defs><linearGradient id="lgs" x1="0" y1="0" x2="0" y2="1"><stop offset="0" stop-color="#000" stop-opacity=".95"/><stop offset=".5" stop-color="#000" stop-opacity=".7"/><stop offset="1" stop-color="#000" stop-opacity=".1"/></linearGradient><linearGradient id="lgr" x1="0" y1="0" x2="1" y2="0"><stop offset="0" stop-color="#000" stop-opacity=".85"/><stop offset="1" stop-color="#000" stop-opacity="0"/></linearGradient></defs>
<rect x="825" y="369" width="309" height="3.5" fill="url(#lgs)"/><rect x="1131" y="354" width="3.5" height="16" fill="url(#lgr)"/>
<rect x="822.5" y="351.5" width="308" height="17" fill="#fff" fill-opacity="0.12" stroke="#000" stroke-width="1"/>
<path d="M828 359.2 H852" stroke="#000" stroke-width="2"/><path d="M980 359.2 H1004" stroke="#f00" stroke-width="2"/>
</svg>
<div class="t" style="left:859.5px;top:355px;font-size:11px;font-weight:bold;letter-spacing:1.317px;">Reference PAM</div>
<div class="t" style="left:1011.5px;top:355px;font-size:11px;font-weight:bold;letter-spacing:1.180px;">Construction PAM</div>
<div class="t" style="left:804.3px;top:511px;font-size:10.5px;letter-spacing:0.360px;">0</div>
<div class="t" style="left:797.8px;top:494px;font-size:10.5px;letter-spacing:0.510px;">10</div>
<div class="t" style="left:797.8px;top:478px;font-size:10.5px;letter-spacing:0.510px;">20</div>
<div class="t" style="left:797.8px;top:461px;font-size:10.5px;letter-spacing:0.510px;">30</div>
<div class="t" style="left:797.8px;top:445px;font-size:10.5px;letter-spacing:0.510px;">40</div>
<div class="t" style="left:797.8px;top:428px;font-size:10.5px;letter-spacing:0.510px;">50</div>
<div class="t" style="left:797.8px;top:411px;font-size:10.5px;letter-spacing:0.510px;">60</div>
<div class="t" style="left:797.8px;top:395px;font-size:10.5px;letter-spacing:0.510px;">70</div>
<div class="t" style="left:797.8px;top:378px;font-size:10.5px;letter-spacing:0.510px;">80</div>
<div class="t" style="left:797.8px;top:362px;font-size:10.5px;letter-spacing:0.510px;">90</div>
<div class="t" style="left:790.9px;top:345px;font-size:10.5px;letter-spacing:0.694px;">100</div>
<div class="t" style="left:814.9px;top:524px;font-size:10.5px;letter-spacing:0.360px;">0</div>
<div class="t" style="left:849.23px;top:524px;font-size:10.5px;letter-spacing:0.360px;">1</div>
<div class="t" style="left:883.56px;top:524px;font-size:10.5px;letter-spacing:0.360px;">2</div>
<div class="t" style="left:917.89px;top:524px;font-size:10.5px;letter-spacing:0.360px;">3</div>
<div class="t" style="left:952.22px;top:524px;font-size:10.5px;letter-spacing:0.360px;">4</div>
<div class="t" style="left:986.55px;top:524px;font-size:10.5px;letter-spacing:0.360px;">5</div>
<div class="t" style="left:1020.88px;top:524px;font-size:10.5px;letter-spacing:0.360px;">6</div>
<div class="t" style="left:1055.21px;top:524px;font-size:10.5px;letter-spacing:0.360px;">7</div>
<div class="t" style="left:1089.54px;top:524px;font-size:10.5px;letter-spacing:0.360px;">8</div>
<div class="t" style="left:1123.87px;top:524px;font-size:10.5px;letter-spacing:0.360px;">9</div>
<div class="t" style="left:1154.95px;top:524px;font-size:10.5px;letter-spacing:0.510px;">10</div>
<div class="t" style="left:846px;top:537px;font-size:11px;letter-spacing:0.903px;">Annual average frequency of exceeding l = 1 / TR</div>
<div class="t" style="left:779px;top:432px;width:0;height:0"><div class="t" style="left:-100px;top:-6px;width:200px;font-size:11px;letter-spacing:0.86px;transform:rotate(-90deg);transform-origin:100px 6px;text-align:center">Direct economic loss (% of CR)</div></div>
<div class="a" style="left:337px;top:643px;width:89px;height:26px;background:#fff;border-style:solid;border-width:2px;border-color:#696969 #fff #fff #696969;"></div>
<div class="a" style="left:337px;top:643px;width:89px;height:1px;background:#a0a0a0"></div>
<div class="a" style="left:337px;top:643px;width:1px;height:26px;background:#a0a0a0"></div>
<div class="a" style="left:424px;top:644px;width:1px;height:24px;background:#e3e3e3"></div>
<div class="a" style="left:338px;top:667px;width:87px;height:1px;background:#e3e3e3"></div>
<div class="a" style="left:425px;top:643px;width:1px;height:26px;background:#fff"></div>
<div class="a" style="left:337px;top:668px;width:89px;height:1px;background:#fff"></div>
<div class="t" style="left:380.882px;top:650px;font-size:13px;width:0;display:flex;justify-content:center;letter-spacing:-1.235px;"><span>PAM</span></div>
<div class="a" style="left:427px;top:643px;width:89px;height:26px;background:#fff;border-style:solid;border-width:2px;border-color:#696969 #fff #fff #696969;"></div>
<div class="a" style="left:427px;top:643px;width:89px;height:1px;background:#a0a0a0"></div>
<div class="a" style="left:427px;top:643px;width:1px;height:26px;background:#a0a0a0"></div>
<div class="a" style="left:514px;top:644px;width:1px;height:24px;background:#e3e3e3"></div>
<div class="a" style="left:428px;top:667px;width:87px;height:1px;background:#e3e3e3"></div>
<div class="a" style="left:515px;top:643px;width:1px;height:26px;background:#fff"></div>
<div class="a" style="left:427px;top:668px;width:89px;height:1px;background:#fff"></div>
<div class="t" style="left:470.926px;top:650px;font-size:13px;width:0;display:flex;justify-content:center;letter-spacing:-1.147px;"><span>PAM Class</span></div>
<div class="a" style="left:337px;top:670px;width:89px;height:26px;background:#fff;border-style:solid;border-width:2px;border-color:#696969 #fff #fff #696969;"></div>
<div class="a" style="left:337px;top:670px;width:89px;height:1px;background:#a0a0a0"></div>
<div class="a" style="left:337px;top:670px;width:1px;height:26px;background:#a0a0a0"></div>
<div class="a" style="left:424px;top:671px;width:1px;height:24px;background:#e3e3e3"></div>
<div class="a" style="left:338px;top:694px;width:87px;height:1px;background:#e3e3e3"></div>
<div class="a" style="left:425px;top:670px;width:1px;height:26px;background:#fff"></div>
<div class="a" style="left:337px;top:695px;width:89px;height:1px;background:#fff"></div>
<div class="a" style="left:340px;top:673px;width:84px;height:21px;background:#008000"></div>
<div class="t" style="left:381.5px;top:677px;font-size:13px;width:0;display:flex;justify-content:center;"><span>&lt;= 0.5%</span></div>
<div class="a" style="left:337px;top:697px;width:89px;height:26px;background:#fff;border-style:solid;border-width:2px;border-color:#696969 #fff #fff #696969;"></div>
<div class="a" style="left:337px;top:697px;width:89px;height:1px;background:#a0a0a0"></div>
<div class="a" style="left:337px;top:697px;width:1px;height:26px;background:#a0a0a0"></div>
<div class="a" style="left:424px;top:698px;width:1px;height:24px;background:#e3e3e3"></div>
<div class="a" style="left:338px;top:721px;width:87px;height:1px;background:#e3e3e3"></div>
<div class="a" style="left:425px;top:697px;width:1px;height:26px;background:#fff"></div>
<div class="a" style="left:337px;top:722px;width:89px;height:1px;background:#fff"></div>
<div class="a" style="left:340px;top:700px;width:84px;height:21px;background:#32cd32"></div>
<div class="t" style="left:381.5px;top:704px;font-size:13px;width:0;display:flex;justify-content:center;"><span>0.5% - 1.0%</span></div>
<div class="a" style="left:337px;top:724px;width:89px;height:29px;background:#fff;border-style:solid;border-width:2px;border-color:#696969 #fff #fff #696969;"></div>
<div class="a" style="left:337px;top:724px;width:89px;height:1px;background:#a0a0a0"></div>
<div class="a" style="left:337px;top:724px;width:1px;height:29px;background:#a0a0a0"></div>
<div class="a" style="left:424px;top:725px;width:1px;height:27px;background:#e3e3e3"></div>
<div class="a" style="left:338px;top:751px;width:87px;height:1px;background:#e3e3e3"></div>
<div class="a" style="left:425px;top:724px;width:1px;height:29px;background:#fff"></div>
<div class="a" style="left:337px;top:752px;width:89px;height:1px;background:#fff"></div>
<div class="a" style="left:340px;top:727px;width:84px;height:24px;background:#9acd32"></div>
<div class="t" style="left:381.5px;top:733px;font-size:13px;width:0;display:flex;justify-content:center;"><span>1.0% - 1.5%</span></div>
<div class="a" style="left:337px;top:751px;width:89px;height:29px;background:#fff;border-style:solid;border-width:2px;border-color:#696969 #fff #fff #696969;"></div>
<div class="a" style="left:337px;top:751px;width:89px;height:1px;background:#a0a0a0"></div>
<div class="a" style="left:337px;top:751px;width:1px;height:29px;background:#a0a0a0"></div>
<div class="a" style="left:424px;top:752px;width:1px;height:27px;background:#e3e3e3"></div>
<div class="a" style="left:338px;top:778px;width:87px;height:1px;background:#e3e3e3"></div>
<div class="a" style="left:425px;top:751px;width:1px;height:29px;background:#fff"></div>
<div class="a" style="left:337px;top:779px;width:89px;height:1px;background:#fff"></div>
<div class="a" style="left:340px;top:754px;width:84px;height:24px;background:#adff2f"></div>
<div class="t" style="left:381.5px;top:760px;font-size:13px;width:0;display:flex;justify-content:center;"><span>1.5% - 2.5%</span></div>
<div class="a" style="left:337px;top:778px;width:89px;height:29px;background:#fff;border-style:solid;border-width:2px;border-color:#696969 #fff #fff #696969;"></div>
<div class="a" style="left:337px;top:778px;width:89px;height:1px;background:#a0a0a0"></div>
<div class="a" style="left:337px;top:778px;width:1px;height:29px;background:#a0a0a0"></div>
<div class="a" style="left:424px;top:779px;width:1px;height:27px;background:#e3e3e3"></div>
<div class="a" style="left:338px;top:805px;width:87px;height:1px;background:#e3e3e3"></div>
<div class="a" style="left:425px;top:778px;width:1px;height:29px;background:#fff"></div>
<div class="a" style="left:337px;top:806px;width:89px;height:1px;background:#fff"></div>
<div class="a" style="left:340px;top:781px;width:84px;height:24px;background:#ffff00"></div>
<div class="t" style="left:381.5px;top:787px;font-size:13px;width:0;display:flex;justify-content:center;"><span>2.5% - 3.5%</span></div>
<div class="a" style="left:337px;top:805px;width:89px;height:29px;background:#fff;border-style:solid;border-width:2px;border-color:#696969 #fff #fff #696969;"></div>
<div class="a" style="left:337px;top:805px;width:89px;height:1px;background:#a0a0a0"></div>
<div class="a" style="left:337px;top:805px;width:1px;height:29px;background:#a0a0a0"></div>
<div class="a" style="left:424px;top:806px;width:1px;height:27px;background:#e3e3e3"></div>
<div class="a" style="left:338px;top:832px;width:87px;height:1px;background:#e3e3e3"></div>
<div class="a" style="left:425px;top:805px;width:1px;height:29px;background:#fff"></div>
<div class="a" style="left:337px;top:833px;width:89px;height:1px;background:#fff"></div>
<div class="a" style="left:340px;top:808px;width:84px;height:24px;background:#ffa500"></div>
<div class="t" style="left:381.5px;top:814px;font-size:13px;width:0;display:flex;justify-content:center;"><span>3.5% - 4.5%</span></div>
<div class="a" style="left:337px;top:832px;width:89px;height:29px;background:#fff;border-style:solid;border-width:2px;border-color:#696969 #fff #fff #696969;"></div>
<div class="a" style="left:337px;top:832px;width:89px;height:1px;background:#a0a0a0"></div>
<div class="a" style="left:337px;top:832px;width:1px;height:29px;background:#a0a0a0"></div>
<div class="a" style="left:424px;top:833px;width:1px;height:27px;background:#e3e3e3"></div>
<div class="a" style="left:338px;top:859px;width:87px;height:1px;background:#e3e3e3"></div>
<div class="a" style="left:425px;top:832px;width:1px;height:29px;background:#fff"></div>
<div class="a" style="left:337px;top:860px;width:89px;height:1px;background:#fff"></div>
<div class="a" style="left:340px;top:835px;width:84px;height:24px;background:#ff6347"></div>
<div class="t" style="left:381.5px;top:841px;font-size:13px;width:0;display:flex;justify-content:center;"><span>4.5% - 7.5%</span></div>
<div class="a" style="left:337px;top:859px;width:89px;height:29px;background:#fff;border-style:solid;border-width:2px;border-color:#696969 #fff #fff #696969;"></div>
<div class="a" style="left:337px;top:859px;width:89px;height:1px;background:#a0a0a0"></div>
<div class="a" style="left:337px;top:859px;width:1px;height:29px;background:#a0a0a0"></div>
<div class="a" style="left:424px;top:860px;width:1px;height:27px;background:#e3e3e3"></div>
<div class="a" style="left:338px;top:886px;width:87px;height:1px;background:#e3e3e3"></div>
<div class="a" style="left:425px;top:859px;width:1px;height:29px;background:#fff"></div>
<div class="a" style="left:337px;top:887px;width:89px;height:1px;background:#fff"></div>
<div class="a" style="left:340px;top:862px;width:84px;height:24px;background:#ff0000"></div>
<div class="t" style="left:381.5px;top:868px;font-size:13px;width:0;display:flex;justify-content:center;"><span>&gt; 7.5%</span></div>
<div class="a" style="left:427px;top:670px;width:89px;height:26px;background:#fff;border-style:solid;border-width:2px;border-color:#696969 #fff #fff #696969;"></div>
<div class="a" style="left:427px;top:670px;width:89px;height:1px;background:#a0a0a0"></div>
<div class="a" style="left:427px;top:670px;width:1px;height:26px;background:#a0a0a0"></div>
<div class="a" style="left:514px;top:671px;width:1px;height:24px;background:#e3e3e3"></div>
<div class="a" style="left:428px;top:694px;width:87px;height:1px;background:#e3e3e3"></div>
<div class="a" style="left:515px;top:670px;width:1px;height:26px;background:#fff"></div>
<div class="a" style="left:427px;top:695px;width:89px;height:1px;background:#fff"></div>
<div class="a" style="left:430px;top:673px;width:84px;height:21px;background:#008000"></div>
<div class="t" style="left:471.5px;top:677px;font-size:13px;width:0;display:flex;justify-content:center;"><span>A+</span></div>
<div class="a" style="left:427px;top:697px;width:89px;height:26px;background:#fff;border-style:solid;border-width:2px;border-color:#696969 #fff #fff #696969;"></div>
<div class="a" style="left:427px;top:697px;width:89px;height:1px;background:#a0a0a0"></div>
<div class="a" style="left:427px;top:697px;width:1px;height:26px;background:#a0a0a0"></div>
<div class="a" style="left:514px;top:698px;width:1px;height:24px;background:#e3e3e3"></div>
<div class="a" style="left:428px;top:721px;width:87px;height:1px;background:#e3e3e3"></div>
<div class="a" style="left:515px;top:697px;width:1px;height:26px;background:#fff"></div>
<div class="a" style="left:427px;top:722px;width:89px;height:1px;background:#fff"></div>
<div class="a" style="left:430px;top:700px;width:84px;height:21px;background:#32cd32"></div>
<div class="t" style="left:471.5px;top:704px;font-size:13px;width:0;display:flex;justify-content:center;"><span>A</span></div>
<div class="a" style="left:427px;top:724px;width:89px;height:29px;background:#fff;border-style:solid;border-width:2px;border-color:#696969 #fff #fff #696969;"></div>
<div class="a" style="left:427px;top:724px;width:89px;height:1px;background:#a0a0a0"></div>
<div class="a" style="left:427px;top:724px;width:1px;height:29px;background:#a0a0a0"></div>
<div class="a" style="left:514px;top:725px;width:1px;height:27px;background:#e3e3e3"></div>
<div class="a" style="left:428px;top:751px;width:87px;height:1px;background:#e3e3e3"></div>
<div class="a" style="left:515px;top:724px;width:1px;height:29px;background:#fff"></div>
<div class="a" style="left:427px;top:752px;width:89px;height:1px;background:#fff"></div>
<div class="a" style="left:430px;top:727px;width:84px;height:24px;background:#9acd32"></div>
<div class="t" style="left:471.5px;top:733px;font-size:13px;width:0;display:flex;justify-content:center;"><span>B</span></div>
<div class="a" style="left:427px;top:751px;width:89px;height:29px;background:#fff;border-style:solid;border-width:2px;border-color:#696969 #fff #fff #696969;"></div>
<div class="a" style="left:427px;top:751px;width:89px;height:1px;background:#a0a0a0"></div>
<div class="a" style="left:427px;top:751px;width:1px;height:29px;background:#a0a0a0"></div>
<div class="a" style="left:514px;top:752px;width:1px;height:27px;background:#e3e3e3"></div>
<div class="a" style="left:428px;top:778px;width:87px;height:1px;background:#e3e3e3"></div>
<div class="a" style="left:515px;top:751px;width:1px;height:29px;background:#fff"></div>
<div class="a" style="left:427px;top:779px;width:89px;height:1px;background:#fff"></div>
<div class="a" style="left:430px;top:754px;width:84px;height:24px;background:#adff2f"></div>
<div class="t" style="left:471.5px;top:760px;font-size:13px;width:0;display:flex;justify-content:center;"><span>C</span></div>
<div class="a" style="left:427px;top:778px;width:89px;height:29px;background:#fff;border-style:solid;border-width:2px;border-color:#696969 #fff #fff #696969;"></div>
<div class="a" style="left:427px;top:778px;width:89px;height:1px;background:#a0a0a0"></div>
<div class="a" style="left:427px;top:778px;width:1px;height:29px;background:#a0a0a0"></div>
<div class="a" style="left:514px;top:779px;width:1px;height:27px;background:#e3e3e3"></div>
<div class="a" style="left:428px;top:805px;width:87px;height:1px;background:#e3e3e3"></div>
<div class="a" style="left:515px;top:778px;width:1px;height:29px;background:#fff"></div>
<div class="a" style="left:427px;top:806px;width:89px;height:1px;background:#fff"></div>
<div class="a" style="left:430px;top:781px;width:84px;height:24px;background:#ffff00"></div>
<div class="t" style="left:471.5px;top:787px;font-size:13px;width:0;display:flex;justify-content:center;"><span>D</span></div>
<div class="a" style="left:427px;top:805px;width:89px;height:29px;background:#fff;border-style:solid;border-width:2px;border-color:#696969 #fff #fff #696969;"></div>
<div class="a" style="left:427px;top:805px;width:89px;height:1px;background:#a0a0a0"></div>
<div class="a" style="left:427px;top:805px;width:1px;height:29px;background:#a0a0a0"></div>
<div class="a" style="left:514px;top:806px;width:1px;height:27px;background:#e3e3e3"></div>
<div class="a" style="left:428px;top:832px;width:87px;height:1px;background:#e3e3e3"></div>
<div class="a" style="left:515px;top:805px;width:1px;height:29px;background:#fff"></div>
<div class="a" style="left:427px;top:833px;width:89px;height:1px;background:#fff"></div>
<div class="a" style="left:430px;top:808px;width:84px;height:24px;background:#ffa500"></div>
<div class="t" style="left:471.5px;top:814px;font-size:13px;width:0;display:flex;justify-content:center;"><span>E</span></div>
<div class="a" style="left:427px;top:832px;width:89px;height:29px;background:#fff;border-style:solid;border-width:2px;border-color:#696969 #fff #fff #696969;"></div>
<div class="a" style="left:427px;top:832px;width:89px;height:1px;background:#a0a0a0"></div>
<div class="a" style="left:427px;top:832px;width:1px;height:29px;background:#a0a0a0"></div>
<div class="a" style="left:514px;top:833px;width:1px;height:27px;background:#e3e3e3"></div>
<div class="a" style="left:428px;top:859px;width:87px;height:1px;background:#e3e3e3"></div>
<div class="a" style="left:515px;top:832px;width:1px;height:29px;background:#fff"></div>
<div class="a" style="left:427px;top:860px;width:89px;height:1px;background:#fff"></div>
<div class="a" style="left:430px;top:835px;width:84px;height:24px;background:#ff6347"></div>
<div class="t" style="left:471.5px;top:841px;font-size:13px;width:0;display:flex;justify-content:center;"><span>F</span></div>
<div class="a" style="left:427px;top:859px;width:89px;height:29px;background:#fff;border-style:solid;border-width:2px;border-color:#696969 #fff #fff #696969;"></div>
<div class="a" style="left:427px;top:859px;width:89px;height:1px;background:#a0a0a0"></div>
<div class="a" style="left:427px;top:859px;width:1px;height:29px;background:#a0a0a0"></div>
<div class="a" style="left:514px;top:860px;width:1px;height:27px;background:#e3e3e3"></div>
<div class="a" style="left:428px;top:886px;width:87px;height:1px;background:#e3e3e3"></div>
<div class="a" style="left:515px;top:859px;width:1px;height:29px;background:#fff"></div>
<div class="a" style="left:427px;top:887px;width:89px;height:1px;background:#fff"></div>
<div class="a" style="left:430px;top:862px;width:84px;height:24px;background:#ff0000"></div>
<div class="t" style="left:471.5px;top:868px;font-size:13px;width:0;display:flex;justify-content:center;"><span>G</span></div>
<div class="a" style="left:537px;top:693px;width:119px;height:26px;background:#fff;border-style:solid;border-width:2px;border-color:#696969 #fff #fff #696969;"></div>
<div class="a" style="left:537px;top:693px;width:119px;height:1px;background:#a0a0a0"></div>
<div class="a" style="left:537px;top:693px;width:1px;height:26px;background:#a0a0a0"></div>
<div class="a" style="left:654px;top:694px;width:1px;height:24px;background:#e3e3e3"></div>
<div class="a" style="left:538px;top:717px;width:117px;height:1px;background:#e3e3e3"></div>
<div class="a" style="left:655px;top:693px;width:1px;height:26px;background:#fff"></div>
<div class="a" style="left:537px;top:718px;width:119px;height:1px;background:#fff"></div>
<div class="t" style="left:596.401px;top:700px;font-size:13px;width:0;display:flex;justify-content:center;letter-spacing:-0.197px;"><span>PAM =0.40%</span></div>
<div class="a" style="left:537px;top:743px;width:119px;height:119px;background:#fff;border-style:solid;border-width:2px;border-color:#696969 #fff #fff #696969;"></div>
<div class="a" style="left:537px;top:743px;width:119px;height:1px;background:#a0a0a0"></div>
<div class="a" style="left:537px;top:743px;width:1px;height:119px;background:#a0a0a0"></div>
<div class="a" style="left:654px;top:744px;width:1px;height:117px;background:#e3e3e3"></div>
<div class="a" style="left:538px;top:860px;width:117px;height:1px;background:#e3e3e3"></div>
<div class="a" style="left:655px;top:743px;width:1px;height:119px;background:#fff"></div>
<div class="a" style="left:537px;top:861px;width:119px;height:1px;background:#fff"></div>
<div class="a" style="left:540px;top:746px;width:114px;height:114px;background:#008000"></div>
<div class="t" style="left:596.59px;top:795px;font-size:16.5px;width:0;display:flex;justify-content:center;letter-spacing:0.179px;"><span>A+</span></div>
<div class="a" style="left:692px;top:643px;width:89px;height:26px;background:#fff;border-style:solid;border-width:2px;border-color:#696969 #fff #fff #696969;"></div>
<div class="a" style="left:692px;top:643px;width:89px;height:1px;background:#a0a0a0"></div>
<div class="a" style="left:692px;top:643px;width:1px;height:26px;background:#a0a0a0"></div>
<div class="a" style="left:779px;top:644px;width:1px;height:24px;background:#e3e3e3"></div>
<div class="a" style="left:693px;top:667px;width:87px;height:1px;background:#e3e3e3"></div>
<div class="a" style="left:780px;top:643px;width:1px;height:26px;background:#fff"></div>
<div class="a" style="left:692px;top:668px;width:89px;height:1px;background:#fff"></div>
<div class="t" style="left:736.127px;top:650px;font-size:13px;width:0;display:flex;justify-content:center;letter-spacing:-0.746px;"><span>IS-V</span></div>
<div class="a" style="left:782px;top:643px;width:89px;height:26px;background:#fff;border-style:solid;border-width:2px;border-color:#696969 #fff #fff #696969;"></div>
<div class="a" style="left:782px;top:643px;width:89px;height:1px;background:#a0a0a0"></div>
<div class="a" style="left:782px;top:643px;width:1px;height:26px;background:#a0a0a0"></div>
<div class="a" style="left:869px;top:644px;width:1px;height:24px;background:#e3e3e3"></div>
<div class="a" style="left:783px;top:667px;width:87px;height:1px;background:#e3e3e3"></div>
<div class="a" style="left:870px;top:643px;width:1px;height:26px;background:#fff"></div>
<div class="a" style="left:782px;top:668px;width:89px;height:1px;background:#fff"></div>
<div class="t" style="left:826.03px;top:650px;font-size:13px;width:0;display:flex;justify-content:center;letter-spacing:-0.940px;"><span>IS-V Class</span></div>
<div class="a" style="left:692px;top:670px;width:89px;height:26px;background:#fff;border-style:solid;border-width:2px;border-color:#696969 #fff #fff #696969;"></div>
<div class="a" style="left:692px;top:670px;width:89px;height:1px;background:#a0a0a0"></div>
<div class="a" style="left:692px;top:670px;width:1px;height:26px;background:#a0a0a0"></div>
<div class="a" style="left:779px;top:671px;width:1px;height:24px;background:#e3e3e3"></div>
<div class="a" style="left:693px;top:694px;width:87px;height:1px;background:#e3e3e3"></div>
<div class="a" style="left:780px;top:670px;width:1px;height:26px;background:#fff"></div>
<div class="a" style="left:692px;top:695px;width:89px;height:1px;background:#fff"></div>
<div class="a" style="left:695px;top:673px;width:84px;height:21px;background:#008000"></div>
<div class="t" style="left:736.5px;top:677px;font-size:13px;width:0;display:flex;justify-content:center;"><span>&gt; 100%</span></div>
<div class="a" style="left:692px;top:697px;width:89px;height:26px;background:#fff;border-style:solid;border-width:2px;border-color:#696969 #fff #fff #696969;"></div>
<div class="a" style="left:692px;top:697px;width:89px;height:1px;background:#a0a0a0"></div>
<div class="a" style="left:692px;top:697px;width:1px;height:26px;background:#a0a0a0"></div>
<div class="a" style="left:779px;top:698px;width:1px;height:24px;background:#e3e3e3"></div>
<div class="a" style="left:693px;top:721px;width:87px;height:1px;background:#e3e3e3"></div>
<div class="a" style="left:780px;top:697px;width:1px;height:26px;background:#fff"></div>
<div class="a" style="left:692px;top:722px;width:89px;height:1px;background:#fff"></div>
<div class="a" style="left:695px;top:700px;width:84px;height:21px;background:#32cd32"></div>
<div class="t" style="left:736.5px;top:704px;font-size:13px;width:0;display:flex;justify-content:center;"><span>80% - 100%</span></div>
<div class="a" style="left:692px;top:724px;width:89px;height:29px;background:#fff;border-style:solid;border-width:2px;border-color:#696969 #fff #fff #696969;"></div>
<div class="a" style="left:692px;top:724px;width:89px;height:1px;background:#a0a0a0"></div>
<div class="a" style="left:692px;top:724px;width:1px;height:29px;background:#a0a0a0"></div>
<div class="a" style="left:779px;top:725px;width:1px;height:27px;background:#e3e3e3"></div>
<div class="a" style="left:693px;top:751px;width:87px;height:1px;background:#e3e3e3"></div>
<div class="a" style="left:780px;top:724px;width:1px;height:29px;background:#fff"></div>
<div class="a" style="left:692px;top:752px;width:89px;height:1px;background:#fff"></div>
<div class="a" style="left:695px;top:727px;width:84px;height:24px;background:#9acd32"></div>
<div class="t" style="left:736.5px;top:733px;font-size:13px;width:0;display:flex;justify-content:center;"><span>60% - 80%</span></div>
<div class="a" style="left:692px;top:751px;width:89px;height:29px;background:#fff;border-style:solid;border-width:2px;border-color:#696969 #fff #fff #696969;"></div>
<div class="a" style="left:692px;top:751px;width:89px;height:1px;background:#a0a0a0"></div>
<div class="a" style="left:692px;top:751px;width:1px;height:29px;background:#a0a0a0"></div>
<div class="a" style="left:779px;top:752px;width:1px;height:27px;background:#e3e3e3"></div>
<div class="a" style="left:693px;top:778px;width:87px;height:1px;background:#e3e3e3"></div>
<div class="a" style="left:780px;top:751px;width:1px;height:29px;background:#fff"></div>
<div class="a" style="left:692px;top:779px;width:89px;height:1px;background:#fff"></div>
<div class="a" style="left:695px;top:754px;width:84px;height:24px;background:#adff2f"></div>
<div class="t" style="left:736.5px;top:760px;font-size:13px;width:0;display:flex;justify-content:center;"><span>45% - 60%</span></div>
<div class="a" style="left:692px;top:778px;width:89px;height:29px;background:#fff;border-style:solid;border-width:2px;border-color:#696969 #fff #fff #696969;"></div>
<div class="a" style="left:692px;top:778px;width:89px;height:1px;background:#a0a0a0"></div>
<div class="a" style="left:692px;top:778px;width:1px;height:29px;background:#a0a0a0"></div>
<div class="a" style="left:779px;top:779px;width:1px;height:27px;background:#e3e3e3"></div>
<div class="a" style="left:693px;top:805px;width:87px;height:1px;background:#e3e3e3"></div>
<div class="a" style="left:780px;top:778px;width:1px;height:29px;background:#fff"></div>
<div class="a" style="left:692px;top:806px;width:89px;height:1px;background:#fff"></div>
<div class="a" style="left:695px;top:781px;width:84px;height:24px;background:#ffff00"></div>
<div class="t" style="left:736.5px;top:787px;font-size:13px;width:0;display:flex;justify-content:center;"><span>30% - 45%</span></div>
<div class="a" style="left:692px;top:805px;width:89px;height:29px;background:#fff;border-style:solid;border-width:2px;border-color:#696969 #fff #fff #696969;"></div>
<div class="a" style="left:692px;top:805px;width:89px;height:1px;background:#a0a0a0"></div>
<div class="a" style="left:692px;top:805px;width:1px;height:29px;background:#a0a0a0"></div>
<div class="a" style="left:779px;top:806px;width:1px;height:27px;background:#e3e3e3"></div>
<div class="a" style="left:693px;top:832px;width:87px;height:1px;background:#e3e3e3"></div>
<div class="a" style="left:780px;top:805px;width:1px;height:29px;background:#fff"></div>
<div class="a" style="left:692px;top:833px;width:89px;height:1px;background:#fff"></div>
<div class="a" style="left:695px;top:808px;width:84px;height:24px;background:#ffa500"></div>
<div class="t" style="left:736.5px;top:814px;font-size:13px;width:0;display:flex;justify-content:center;"><span>15% - 30%</span></div>
<div class="a" style="left:692px;top:832px;width:89px;height:29px;background:#fff;border-style:solid;border-width:2px;border-color:#696969 #fff #fff #696969;"></div>
<div class="a" style="left:692px;top:832px;width:89px;height:1px;background:#a0a0a0"></div>
<div class="a" style="left:692px;top:832px;width:1px;height:29px;background:#a0a0a0"></div>
<div class="a" style="left:779px;top:833px;width:1px;height:27px;background:#e3e3e3"></div>
<div class="a" style="left:693px;top:859px;width:87px;height:1px;background:#e3e3e3"></div>
<div class="a" style="left:780px;top:832px;width:1px;height:29px;background:#fff"></div>
<div class="a" style="left:692px;top:860px;width:89px;height:1px;background:#fff"></div>
<div class="a" style="left:695px;top:835px;width:84px;height:24px;background:#ff6347"></div>
<div class="t" style="left:736.5px;top:841px;font-size:13px;width:0;display:flex;justify-content:center;"><span>&lt; 15%</span></div>
<div class="a" style="left:782px;top:670px;width:89px;height:26px;background:#fff;border-style:solid;border-width:2px;border-color:#696969 #fff #fff #696969;"></div>
<div class="a" style="left:782px;top:670px;width:89px;height:1px;background:#a0a0a0"></div>
<div class="a" style="left:782px;top:670px;width:1px;height:26px;background:#a0a0a0"></div>
<div class="a" style="left:869px;top:671px;width:1px;height:24px;background:#e3e3e3"></div>
<div class="a" style="left:783px;top:694px;width:87px;height:1px;background:#e3e3e3"></div>
<div class="a" style="left:870px;top:670px;width:1px;height:26px;background:#fff"></div>
<div class="a" style="left:782px;top:695px;width:89px;height:1px;background:#fff"></div>
<div class="a" style="left:785px;top:673px;width:84px;height:21px;background:#008000"></div>
<div class="t" style="left:826.5px;top:677px;font-size:13px;width:0;display:flex;justify-content:center;"><span>A+</span></div>
<div class="a" style="left:782px;top:697px;width:89px;height:26px;background:#fff;border-style:solid;border-width:2px;border-color:#696969 #fff #fff #696969;"></div>
<div class="a" style="left:782px;top:697px;width:89px;height:1px;background:#a0a0a0"></div>
<div class="a" style="left:782px;top:697px;width:1px;height:26px;background:#a0a0a0"></div>
<div class="a" style="left:869px;top:698px;width:1px;height:24px;background:#e3e3e3"></div>
<div class="a" style="left:783px;top:721px;width:87px;height:1px;background:#e3e3e3"></div>
<div class="a" style="left:870px;top:697px;width:1px;height:26px;background:#fff"></div>
<div class="a" style="left:782px;top:722px;width:89px;height:1px;background:#fff"></div>
<div class="a" style="left:785px;top:700px;width:84px;height:21px;background:#32cd32"></div>
<div class="t" style="left:826.5px;top:704px;font-size:13px;width:0;display:flex;justify-content:center;"><span>A</span></div>
<div class="a" style="left:782px;top:724px;width:89px;height:29px;background:#fff;border-style:solid;border-width:2px;border-color:#696969 #fff #fff #696969;"></div>
<div class="a" style="left:782px;top:724px;width:89px;height:1px;background:#a0a0a0"></div>
<div class="a" style="left:782px;top:724px;width:1px;height:29px;background:#a0a0a0"></div>
<div class="a" style="left:869px;top:725px;width:1px;height:27px;background:#e3e3e3"></div>
<div class="a" style="left:783px;top:751px;width:87px;height:1px;background:#e3e3e3"></div>
<div class="a" style="left:870px;top:724px;width:1px;height:29px;background:#fff"></div>
<div class="a" style="left:782px;top:752px;width:89px;height:1px;background:#fff"></div>
<div class="a" style="left:785px;top:727px;width:84px;height:24px;background:#9acd32"></div>
<div class="t" style="left:826.5px;top:733px;font-size:13px;width:0;display:flex;justify-content:center;"><span>B</span></div>
<div class="a" style="left:782px;top:751px;width:89px;height:29px;background:#fff;border-style:solid;border-width:2px;border-color:#696969 #fff #fff #696969;"></div>
<div class="a" style="left:782px;top:751px;width:89px;height:1px;background:#a0a0a0"></div>
<div class="a" style="left:782px;top:751px;width:1px;height:29px;background:#a0a0a0"></div>
<div class="a" style="left:869px;top:752px;width:1px;height:27px;background:#e3e3e3"></div>
<div class="a" style="left:783px;top:778px;width:87px;height:1px;background:#e3e3e3"></div>
<div class="a" style="left:870px;top:751px;width:1px;height:29px;background:#fff"></div>
<div class="a" style="left:782px;top:779px;width:89px;height:1px;background:#fff"></div>
<div class="a" style="left:785px;top:754px;width:84px;height:24px;background:#adff2f"></div>
<div class="t" style="left:826.5px;top:760px;font-size:13px;width:0;display:flex;justify-content:center;"><span>C</span></div>
<div class="a" style="left:782px;top:778px;width:89px;height:29px;background:#fff;border-style:solid;border-width:2px;border-color:#696969 #fff #fff #696969;"></div>
<div class="a" style="left:782px;top:778px;width:89px;height:1px;background:#a0a0a0"></div>
<div class="a" style="left:782px;top:778px;width:1px;height:29px;background:#a0a0a0"></div>
<div class="a" style="left:869px;top:779px;width:1px;height:27px;background:#e3e3e3"></div>
<div class="a" style="left:783px;top:805px;width:87px;height:1px;background:#e3e3e3"></div>
<div class="a" style="left:870px;top:778px;width:1px;height:29px;background:#fff"></div>
<div class="a" style="left:782px;top:806px;width:89px;height:1px;background:#fff"></div>
<div class="a" style="left:785px;top:781px;width:84px;height:24px;background:#ffff00"></div>
<div class="t" style="left:826.5px;top:787px;font-size:13px;width:0;display:flex;justify-content:center;"><span>D</span></div>
<div class="a" style="left:782px;top:805px;width:89px;height:29px;background:#fff;border-style:solid;border-width:2px;border-color:#696969 #fff #fff #696969;"></div>
<div class="a" style="left:782px;top:805px;width:89px;height:1px;background:#a0a0a0"></div>
<div class="a" style="left:782px;top:805px;width:1px;height:29px;background:#a0a0a0"></div>
<div class="a" style="left:869px;top:806px;width:1px;height:27px;background:#e3e3e3"></div>
<div class="a" style="left:783px;top:832px;width:87px;height:1px;background:#e3e3e3"></div>
<div class="a" style="left:870px;top:805px;width:1px;height:29px;background:#fff"></div>
<div class="a" style="left:782px;top:833px;width:89px;height:1px;background:#fff"></div>
<div class="a" style="left:785px;top:808px;width:84px;height:24px;background:#ffa500"></div>
<div class="t" style="left:826.5px;top:814px;font-size:13px;width:0;display:flex;justify-content:center;"><span>E</span></div>
<div class="a" style="left:782px;top:832px;width:89px;height:29px;background:#fff;border-style:solid;border-width:2px;border-color:#696969 #fff #fff #696969;"></div>
<div class="a" style="left:782px;top:832px;width:89px;height:1px;background:#a0a0a0"></div>
<div class="a" style="left:782px;top:832px;width:1px;height:29px;background:#a0a0a0"></div>
<div class="a" style="left:869px;top:833px;width:1px;height:27px;background:#e3e3e3"></div>
<div class="a" style="left:783px;top:859px;width:87px;height:1px;background:#e3e3e3"></div>
<div class="a" style="left:870px;top:832px;width:1px;height:29px;background:#fff"></div>
<div class="a" style="left:782px;top:860px;width:89px;height:1px;background:#fff"></div>
<div class="a" style="left:785px;top:835px;width:84px;height:24px;background:#ff6347"></div>
<div class="t" style="left:826.5px;top:841px;font-size:13px;width:0;display:flex;justify-content:center;"><span>F</span></div>
<div class="a" style="left:892px;top:693px;width:119px;height:26px;background:#fff;border-style:solid;border-width:2px;border-color:#696969 #fff #fff #696969;"></div>
<div class="a" style="left:892px;top:693px;width:119px;height:1px;background:#a0a0a0"></div>
<div class="a" style="left:892px;top:693px;width:1px;height:26px;background:#a0a0a0"></div>
<div class="a" style="left:1009px;top:694px;width:1px;height:24px;background:#e3e3e3"></div>
<div class="a" style="left:893px;top:717px;width:117px;height:1px;background:#e3e3e3"></div>
<div class="a" style="left:1010px;top:693px;width:1px;height:26px;background:#fff"></div>
<div class="a" style="left:892px;top:718px;width:119px;height:1px;background:#fff"></div>
<div class="t" style="left:951.442px;top:700px;font-size:13px;width:0;display:flex;justify-content:center;letter-spacing:-0.116px;"><span>IS_V =153.69%</span></div>
<div class="a" style="left:892px;top:743px;width:119px;height:119px;background:#fff;border-style:solid;border-width:2px;border-color:#696969 #fff #fff #696969;"></div>
<div class="a" style="left:892px;top:743px;width:119px;height:1px;background:#a0a0a0"></div>
<div class="a" style="left:892px;top:743px;width:1px;height:119px;background:#a0a0a0"></div>
<div class="a" style="left:1009px;top:744px;width:1px;height:117px;background:#e3e3e3"></div>
<div class="a" style="left:893px;top:860px;width:117px;height:1px;background:#e3e3e3"></div>
<div class="a" style="left:1010px;top:743px;width:1px;height:119px;background:#fff"></div>
<div class="a" style="left:892px;top:861px;width:119px;height:1px;background:#fff"></div>
<div class="a" style="left:895px;top:746px;width:114px;height:114px;background:#008000"></div>
<div class="t" style="left:951.59px;top:795px;font-size:16.5px;width:0;display:flex;justify-content:center;letter-spacing:0.179px;"><span>A+</span></div>
<div class="a" style="left:1057px;top:655px;width:89px;height:26px;background:#fff;border-style:solid;border-width:2px;border-color:#696969 #fff #fff #696969;"></div>
<div class="a" style="left:1057px;top:655px;width:89px;height:1px;background:#a0a0a0"></div>
<div class="a" style="left:1057px;top:655px;width:1px;height:26px;background:#a0a0a0"></div>
<div class="a" style="left:1144px;top:656px;width:1px;height:24px;background:#e3e3e3"></div>
<div class="a" style="left:1058px;top:679px;width:87px;height:1px;background:#e3e3e3"></div>
<div class="a" style="left:1145px;top:655px;width:1px;height:26px;background:#fff"></div>
<div class="a" style="left:1057px;top:680px;width:89px;height:1px;background:#fff"></div>
<div class="a" style="left:1060px;top:658px;width:84px;height:21px;background:#008000"></div>
<div class="t" style="left:1101.5px;top:662px;font-size:13px;width:0;display:flex;justify-content:center;"><span>A+</span></div>
<div class="a" style="left:1057px;top:682px;width:89px;height:26px;background:#fff;border-style:solid;border-width:2px;border-color:#696969 #fff #fff #696969;"></div>
<div class="a" style="left:1057px;top:682px;width:89px;height:1px;background:#a0a0a0"></div>
<div class="a" style="left:1057px;top:682px;width:1px;height:26px;background:#a0a0a0"></div>
<div class="a" style="left:1144px;top:683px;width:1px;height:24px;background:#e3e3e3"></div>
<div class="a" style="left:1058px;top:706px;width:87px;height:1px;background:#e3e3e3"></div>
<div class="a" style="left:1145px;top:682px;width:1px;height:26px;background:#fff"></div>
<div class="a" style="left:1057px;top:707px;width:89px;height:1px;background:#fff"></div>
<div class="a" style="left:1060px;top:685px;width:84px;height:21px;background:#32cd32"></div>
<div class="t" style="left:1101.5px;top:689px;font-size:13px;width:0;display:flex;justify-content:center;"><span>A</span></div>
<div class="a" style="left:1057px;top:709px;width:89px;height:29px;background:#fff;border-style:solid;border-width:2px;border-color:#696969 #fff #fff #696969;"></div>
<div class="a" style="left:1057px;top:709px;width:89px;height:1px;background:#a0a0a0"></div>
<div class="a" style="left:1057px;top:709px;width:1px;height:29px;background:#a0a0a0"></div>
<div class="a" style="left:1144px;top:710px;width:1px;height:27px;background:#e3e3e3"></div>
<div class="a" style="left:1058px;top:736px;width:87px;height:1px;background:#e3e3e3"></div>
<div class="a" style="left:1145px;top:709px;width:1px;height:29px;background:#fff"></div>
<div class="a" style="left:1057px;top:737px;width:89px;height:1px;background:#fff"></div>
<div class="a" style="left:1060px;top:712px;width:84px;height:24px;background:#9acd32"></div>
<div class="t" style="left:1101.5px;top:718px;font-size:13px;width:0;display:flex;justify-content:center;"><span>B</span></div>
<div class="a" style="left:1057px;top:736px;width:89px;height:29px;background:#fff;border-style:solid;border-width:2px;border-color:#696969 #fff #fff #696969;"></div>
<div class="a" style="left:1057px;top:736px;width:89px;height:1px;background:#a0a0a0"></div>
<div class="a" style="left:1057px;top:736px;width:1px;height:29px;background:#a0a0a0"></div>
<div class="a" style="left:1144px;top:737px;width:1px;height:27px;background:#e3e3e3"></div>
<div class="a" style="left:1058px;top:763px;width:87px;height:1px;background:#e3e3e3"></div>
<div class="a" style="left:1145px;top:736px;width:1px;height:29px;background:#fff"></div>
<div class="a" style="left:1057px;top:764px;width:89px;height:1px;background:#fff"></div>
<div class="a" style="left:1060px;top:739px;width:84px;height:24px;background:#adff2f"></div>
<div class="t" style="left:1101.5px;top:745px;font-size:13px;width:0;display:flex;justify-content:center;"><span>C</span></div>
<div class="a" style="left:1057px;top:763px;width:89px;height:29px;background:#fff;border-style:solid;border-width:2px;border-color:#696969 #fff #fff #696969;"></div>
<div class="a" style="left:1057px;top:763px;width:89px;height:1px;background:#a0a0a0"></div>
<div class="a" style="left:1057px;top:763px;width:1px;height:29px;background:#a0a0a0"></div>
<div class="a" style="left:1144px;top:764px;width:1px;height:27px;background:#e3e3e3"></div>
<div class="a" style="left:1058px;top:790px;width:87px;height:1px;background:#e3e3e3"></div>
<div class="a" style="left:1145px;top:763px;width:1px;height:29px;background:#fff"></div>
<div class="a" style="left:1057px;top:791px;width:89px;height:1px;background:#fff"></div>
<div class="a" style="left:1060px;top:766px;width:84px;height:24px;background:#ffff00"></div>
<div class="t" style="left:1101.5px;top:772px;font-size:13px;width:0;display:flex;justify-content:center;"><span>D</span></div>
<div class="a" style="left:1057px;top:790px;width:89px;height:29px;background:#fff;border-style:solid;border-width:2px;border-color:#696969 #fff #fff #696969;"></div>
<div class="a" style="left:1057px;top:790px;width:89px;height:1px;background:#a0a0a0"></div>
<div class="a" style="left:1057px;top:790px;width:1px;height:29px;background:#a0a0a0"></div>
<div class="a" style="left:1144px;top:791px;width:1px;height:27px;background:#e3e3e3"></div>
<div class="a" style="left:1058px;top:817px;width:87px;height:1px;background:#e3e3e3"></div>
<div class="a" style="left:1145px;top:790px;width:1px;height:29px;background:#fff"></div>
<div class="a" style="left:1057px;top:818px;width:89px;height:1px;background:#fff"></div>
<div class="a" style="left:1060px;top:793px;width:84px;height:24px;background:#ffa500"></div>
<div class="t" style="left:1101.5px;top:799px;font-size:13px;width:0;display:flex;justify-content:center;"><span>E</span></div>
<div class="a" style="left:1057px;top:817px;width:89px;height:29px;background:#fff;border-style:solid;border-width:2px;border-color:#696969 #fff #fff #696969;"></div>
<div class="a" style="left:1057px;top:817px;width:89px;height:1px;background:#a0a0a0"></div>
<div class="a" style="left:1057px;top:817px;width:1px;height:29px;background:#a0a0a0"></div>
<div class="a" style="left:1144px;top:818px;width:1px;height:27px;background:#e3e3e3"></div>
<div class="a" style="left:1058px;top:844px;width:87px;height:1px;background:#e3e3e3"></div>
<div class="a" style="left:1145px;top:817px;width:1px;height:29px;background:#fff"></div>
<div class="a" style="left:1057px;top:845px;width:89px;height:1px;background:#fff"></div>
<div class="a" style="left:1060px;top:820px;width:84px;height:24px;background:#ff6347"></div>
<div class="t" style="left:1101.5px;top:826px;font-size:13px;width:0;display:flex;justify-content:center;"><span>F</span></div>
<div class="a" style="left:1057px;top:844px;width:89px;height:29px;background:#fff;border-style:solid;border-width:2px;border-color:#696969 #fff #fff #696969;"></div>
<div class="a" style="left:1057px;top:844px;width:89px;height:1px;background:#a0a0a0"></div>
<div class="a" style="left:1057px;top:844px;width:1px;height:29px;background:#a0a0a0"></div>
<div class="a" style="left:1144px;top:845px;width:1px;height:27px;background:#e3e3e3"></div>
<div class="a" style="left:1058px;top:871px;width:87px;height:1px;background:#e3e3e3"></div>
<div class="a" style="left:1145px;top:844px;width:1px;height:29px;background:#fff"></div>
<div class="a" style="left:1057px;top:872px;width:89px;height:1px;background:#fff"></div>
<div class="a" style="left:1060px;top:847px;width:84px;height:24px;background:#ff0000"></div>
<div class="t" style="left:1101.5px;top:853px;font-size:13px;width:0;display:flex;justify-content:center;"><span>G</span></div>
<div class="a" style="left:1178px;top:655px;width:215px;height:215px;background:#fff;border-style:solid;border-width:2px;border-color:#696969 #fff #fff #696969;"></div>
<div class="a" style="left:1178px;top:655px;width:215px;height:1px;background:#a0a0a0"></div>
<div class="a" style="left:1178px;top:655px;width:1px;height:215px;background:#a0a0a0"></div>
<div class="a" style="left:1391px;top:656px;width:1px;height:213px;background:#e3e3e3"></div>
<div class="a" style="left:1179px;top:868px;width:213px;height:1px;background:#e3e3e3"></div>
<div class="a" style="left:1392px;top:655px;width:1px;height:215px;background:#fff"></div>
<div class="a" style="left:1178px;top:869px;width:215px;height:1px;background:#fff"></div>
<div class="a" style="left:1181px;top:658px;width:210px;height:210px;background:#008000"></div>
<div class="t" style="left:1235px;top:748px;width:100px;text-align:center;font-size:33px;font-weight:bold;color:#000080;transform:scaleX(1.07)">A+</div>
</body>
</html>
